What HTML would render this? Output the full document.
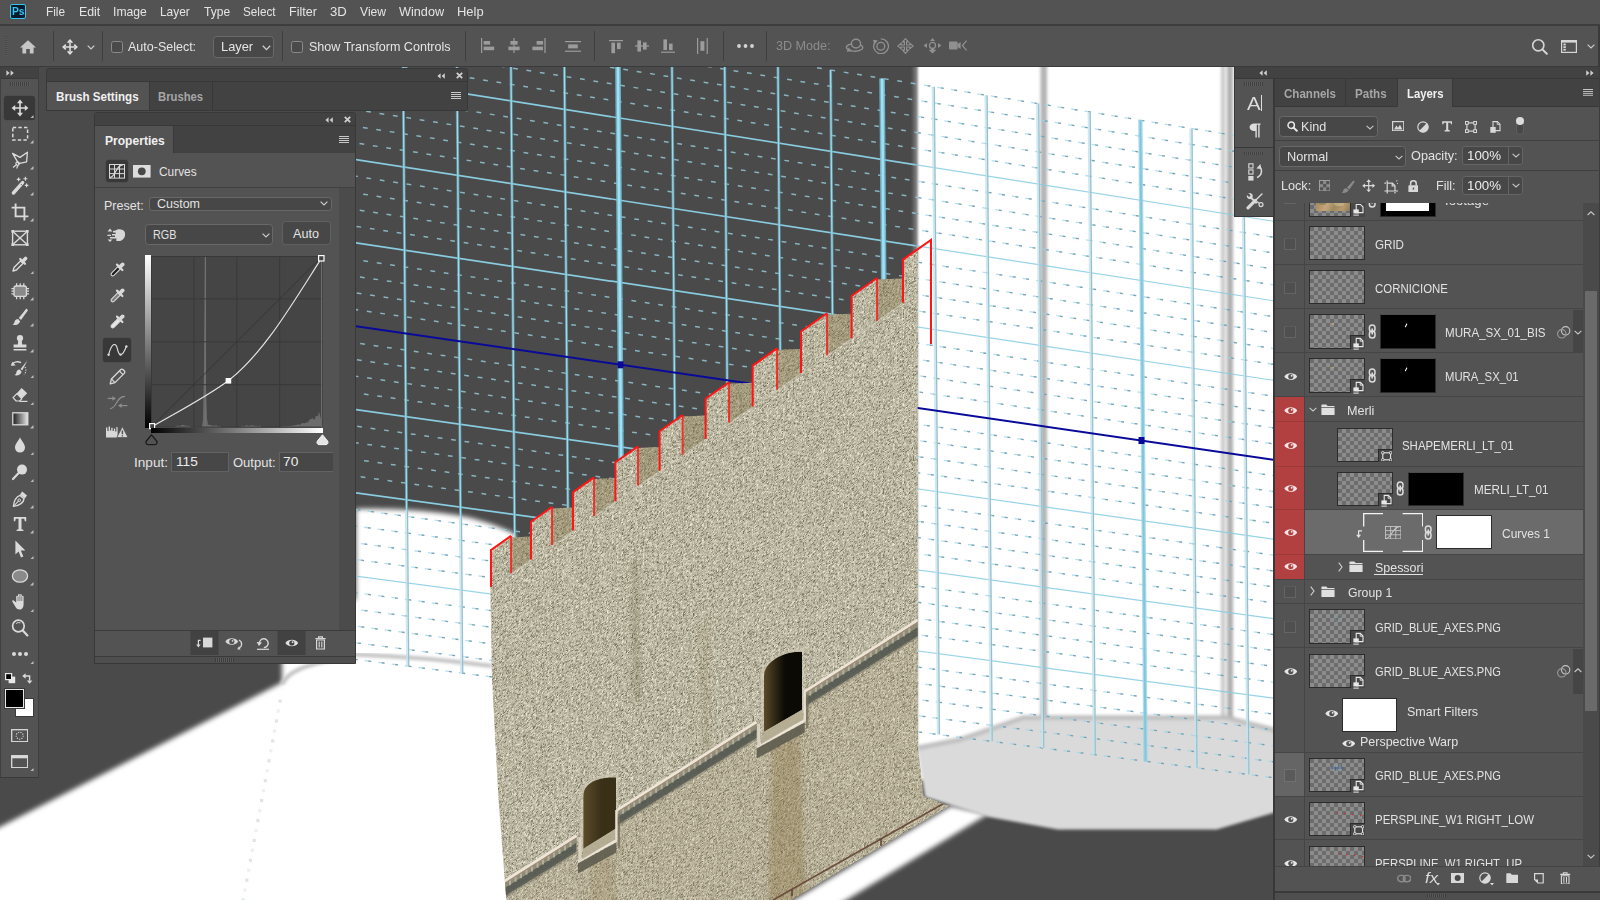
<!DOCTYPE html>
<html lang="en"><head><meta charset="utf-8"><title>Photoshop</title>
<style>
html,body{margin:0;padding:0}
body{width:1600px;height:900px;overflow:hidden;position:relative;background:#4a4a4a;font-family:"Liberation Sans",sans-serif}
.a{position:absolute;display:block}
.bl{display:inline-block;width:0;height:0;vertical-align:baseline}
.t{position:absolute;white-space:pre;line-height:1;transform-origin:0 50%;display:block}
svg{overflow:hidden}
</style></head>
<body>
<svg id="cv" width="1275" height="833" viewBox="0 67 1275 833" style="position:absolute;left:0;top:67px">
<defs>
<filter id="b1" x="-5%" y="-5%" width="110%" height="110%"><feGaussianBlur stdDeviation="1.6"/></filter>
<filter id="b2" x="-5%" y="-5%" width="110%" height="110%"><feGaussianBlur stdDeviation="2.5"/></filter>
<filter id="b05" x="-5%" y="-5%" width="110%" height="110%"><feGaussianBlur stdDeviation="0.6"/></filter>
<filter id="stone" x="0" y="0" width="100%" height="100%" filterUnits="objectBoundingBox" color-interpolation-filters="sRGB">
<feTurbulence type="fractalNoise" baseFrequency="0.42 0.8" numOctaves="3" seed="7" result="n"/>
<feColorMatrix in="n" type="matrix" values="0 0 0 0 0  0 0 0 0 0  0 0 0 0 0  -5.4 0 0 0 2.55" result="a"/>
<feFlood flood-color="#6b664f" result="dk"/>
<feComposite in="dk" in2="a" operator="in" result="dark"/>
<feColorMatrix in="n" type="matrix" values="0 0 0 0 0  0 0 0 0 0  0 0 0 0 0  0 5.4 0 0 -2.85" result="a2"/>
<feFlood flood-color="#efebd9" result="lt"/>
<feComposite in="lt" in2="a2" operator="in" result="light"/>
<feTurbulence type="fractalNoise" baseFrequency="0.9 0.95" numOctaves="1" seed="23" result="n2"/>
<feColorMatrix in="n2" type="matrix" values="0 0 0 0 0  0 0 0 0 0  0 0 0 0 0  -4.5 0 0 0 2.0" result="a3"/>
<feFlood flood-color="#5e5942" result="dk2"/>
<feComposite in="dk2" in2="a3" operator="in" result="dark2"/>
<feColorMatrix in="n2" type="matrix" values="0 0 0 0 0  0 0 0 0 0  0 0 0 0 0  0 4.5 0 0 -2.5" result="a4"/>
<feFlood flood-color="#f4f0e0" result="lt2"/>
<feComposite in="lt2" in2="a4" operator="in" result="light2"/>
<feMerge result="m"><feMergeNode in="SourceGraphic"/><feMergeNode in="dark"/><feMergeNode in="light"/><feMergeNode in="dark2"/><feMergeNode in="light2"/></feMerge>
<feComposite in="m" in2="SourceGraphic" operator="in"/>
</filter>
<linearGradient id="wallg" x1="0" y1="0" x2="0" y2="1">
<stop offset="0" stop-color="#bfbba6"/><stop offset="1" stop-color="#bab49d"/></linearGradient>
<clipPath id="cvclip"><rect x="0" y="67" width="1275" height="833"/></clipPath>
</defs>
<rect x="0" y="67" width="1275" height="833" fill="#4a4a4a"/>
<g filter="url(#b1)">
<path d="M917 60 L1290 60 L1290 780 L917 780 Z" fill="#fff"/>
</g><g filter="url(#b2)">
<path d="M-10 832 L282 682.5 L282 600 L356 600 L356 509 C400 508 450 512 478 520 C495 525 505 529 515 534 L515 910 L-10 910 Z" fill="#fff"/>
</g><g filter="url(#b1)">
</g>
<path d="M951 806 L988 814 L838 905 L786 905 Z" fill="#fff" filter="url(#b2)"/>
<g filter="url(#b1)">
<rect x="1040.5" y="60" width="6.5" height="670" fill="#b4b4b4"/>
<rect x="1221" y="60" width="4" height="670" fill="#c8c8c8"/>
<rect x="1227" y="60" width="6" height="670" fill="#b0b0b0"/>
<rect x="913" y="60" width="4" height="200" fill="#8a8a8a" opacity="0.6"/>
</g>
<path d="M282.5 684 C287 673 302 666.5 322 662 C335 659 345 656 356 654.5 C410 656.5 450 660.5 492 666" fill="none" stroke="#c2c2c2" stroke-width="4" filter="url(#b1)"/>
<rect x="278.5" y="699.5" width="3.2" height="3.2" fill="#dde1e6" opacity="0.9"/>
<rect x="276.6" y="709.5" width="3.2" height="3.2" fill="#dde1e6" opacity="0.5"/>
<rect x="274.8" y="719.4" width="3.2" height="3.2" fill="#dde1e6" opacity="0.9"/>
<rect x="272.9" y="729.4" width="3.2" height="3.2" fill="#dde1e6" opacity="0.5"/>
<rect x="271.1" y="739.3" width="3.2" height="3.2" fill="#dde1e6" opacity="0.9"/>
<rect x="269.2" y="749.2" width="3.2" height="3.2" fill="#dde1e6" opacity="0.5"/>
<rect x="267.4" y="759.2" width="3.2" height="3.2" fill="#dde1e6" opacity="0.9"/>
<rect x="265.6" y="769.1" width="3.2" height="3.2" fill="#dde1e6" opacity="0.5"/>
<rect x="263.7" y="779.1" width="3.2" height="3.2" fill="#dde1e6" opacity="0.9"/>
<rect x="261.9" y="789" width="3.2" height="3.2" fill="#dde1e6" opacity="0.5"/>
<rect x="260" y="799" width="3.2" height="3.2" fill="#dde1e6" opacity="0.9"/>
<rect x="258.1" y="809" width="3.2" height="3.2" fill="#dde1e6" opacity="0.5"/>
<rect x="256.3" y="818.9" width="3.2" height="3.2" fill="#dde1e6" opacity="0.9"/>
<rect x="254.4" y="828.9" width="3.2" height="3.2" fill="#dde1e6" opacity="0.5"/>
<rect x="252.6" y="838.8" width="3.2" height="3.2" fill="#dde1e6" opacity="0.9"/>
<rect x="250.8" y="848.8" width="3.2" height="3.2" fill="#dde1e6" opacity="0.5"/>
<rect x="248.9" y="858.7" width="3.2" height="3.2" fill="#dde1e6" opacity="0.9"/>
<rect x="247.1" y="868.6" width="3.2" height="3.2" fill="#dde1e6" opacity="0.5"/>
<rect x="245.2" y="878.6" width="3.2" height="3.2" fill="#dde1e6" opacity="0.9"/>
<rect x="243.3" y="888.5" width="3.2" height="3.2" fill="#dde1e6" opacity="0.5"/>
<rect x="241.5" y="898.5" width="3.2" height="3.2" fill="#dde1e6" opacity="0.9"/>
<g filter="url(#b1)">
<path d="M917 747 L960 738.7 L1023.6 716.7 L1226.5 716.7 L1290 733 L1290 808 L1216.7 829.6 L1057.8 829.6 L989 817 L925 797 Z" fill="#dadada"/>
<path d="M917 748 L960 739.5 L1023.6 717.5 L1226.5 717.5 L1290 734" fill="none" stroke="#b9b9b9" stroke-width="5" opacity="0.8"/>
</g>
<clipPath id="gdark"><path d="M356 60 L915.5 60 L915.5 545 L515 545 L515 534 C505 529 495 525 478 520 C450 512 400 508 356 509 Z"/></clipPath>
<clipPath id="glight"><path clip-rule="evenodd" d="M0 67 H1275 V900 H0 Z M356 60 L915.5 60 L915.5 545 L515 545 L515 534 C505 529 495 525 478 520 C450 512 400 508 356 509 Z M0 60 H356 V640 H0 Z"/></clipPath>
<g clip-path="url(#gdark)" fill="none">
<path d="M282 -18.9 L1275 142" stroke="#a4e0f0" stroke-width="1.5" stroke-dasharray="4.8 8.75" stroke-dashoffset="0" opacity="0.7"/>
<path d="M282 -2.1 L1275 157.9" stroke="#a4e0f0" stroke-width="1.5" stroke-dasharray="4.8 8.75" stroke-dashoffset="3.3" opacity="0.7"/>
<path d="M282 14.6 L1275 173.8" stroke="#a4e0f0" stroke-width="1.5" stroke-dasharray="4.8 8.75" stroke-dashoffset="6.6" opacity="0.7"/>
<path d="M282 31.3 L1275 189.7" stroke="#a4e0f0" stroke-width="1.5" stroke-dasharray="4.8 8.75" stroke-dashoffset="9.9" opacity="0.7"/>
<path d="M282 48 L1275 205.6" stroke="#a4e0f0" stroke-width="1.5" stroke-dasharray="4.8 8.75" stroke-dashoffset="13.2" opacity="0.7"/>
<path d="M282 64.7 L1275 221.5" stroke="#8ed6ec" stroke-width="1.7" opacity="0.92"/>
<path d="M282 81.5 L1275 237.4" stroke="#a4e0f0" stroke-width="1.5" stroke-dasharray="4.8 8.75" stroke-dashoffset="6.4" opacity="0.7"/>
<path d="M282 98.2 L1275 253.3" stroke="#a4e0f0" stroke-width="1.5" stroke-dasharray="4.8 8.75" stroke-dashoffset="9.7" opacity="0.7"/>
<path d="M282 114.9 L1275 269.2" stroke="#a4e0f0" stroke-width="1.5" stroke-dasharray="4.8 8.75" stroke-dashoffset="13" opacity="0.7"/>
<path d="M282 131.6 L1275 285.1" stroke="#a4e0f0" stroke-width="1.5" stroke-dasharray="4.8 8.75" stroke-dashoffset="2.9" opacity="0.7"/>
<path d="M282 148.3 L1275 301" stroke="#8ed6ec" stroke-width="1.7" opacity="0.92"/>
<path d="M282 165 L1275 316.9" stroke="#a4e0f0" stroke-width="1.5" stroke-dasharray="4.8 8.75" stroke-dashoffset="9.5" opacity="0.7"/>
<path d="M282 181.8 L1275 332.8" stroke="#a4e0f0" stroke-width="1.5" stroke-dasharray="4.8 8.75" stroke-dashoffset="12.8" opacity="0.7"/>
<path d="M282 198.5 L1275 348.7" stroke="#a4e0f0" stroke-width="1.5" stroke-dasharray="4.8 8.75" stroke-dashoffset="2.7" opacity="0.7"/>
<path d="M282 215.2 L1275 364.6" stroke="#a4e0f0" stroke-width="1.5" stroke-dasharray="4.8 8.75" stroke-dashoffset="6" opacity="0.7"/>
<path d="M282 231.9 L1275 380.5" stroke="#8ed6ec" stroke-width="1.7" opacity="0.92"/>
<path d="M282 248.6 L1275 396.4" stroke="#a4e0f0" stroke-width="1.5" stroke-dasharray="4.8 8.75" stroke-dashoffset="12.6" opacity="0.7"/>
<path d="M282 265.4 L1275 412.3" stroke="#a4e0f0" stroke-width="1.5" stroke-dasharray="4.8 8.75" stroke-dashoffset="2.5" opacity="0.7"/>
<path d="M282 282.1 L1275 428.2" stroke="#a4e0f0" stroke-width="1.5" stroke-dasharray="4.8 8.75" stroke-dashoffset="5.8" opacity="0.7"/>
<path d="M282 298.8 L1275 444.1" stroke="#a4e0f0" stroke-width="1.5" stroke-dasharray="4.8 8.75" stroke-dashoffset="9.1" opacity="0.7"/>
<path d="M282 332.2 L1275 475.9" stroke="#a4e0f0" stroke-width="1.5" stroke-dasharray="4.8 8.75" stroke-dashoffset="2.3" opacity="0.7"/>
<path d="M282 349 L1275 491.8" stroke="#a4e0f0" stroke-width="1.5" stroke-dasharray="4.8 8.75" stroke-dashoffset="5.6" opacity="0.7"/>
<path d="M282 365.7 L1275 507.7" stroke="#a4e0f0" stroke-width="1.5" stroke-dasharray="4.8 8.75" stroke-dashoffset="8.9" opacity="0.7"/>
<path d="M282 382.4 L1275 523.5" stroke="#a4e0f0" stroke-width="1.5" stroke-dasharray="4.8 8.75" stroke-dashoffset="12.2" opacity="0.7"/>
<path d="M282 399.1 L1275 539.4" stroke="#8ed6ec" stroke-width="1.7" opacity="0.92"/>
<path d="M282 415.8 L1275 555.3" stroke="#a4e0f0" stroke-width="1.5" stroke-dasharray="4.8 8.75" stroke-dashoffset="5.4" opacity="0.7"/>
<path d="M282 432.5 L1275 571.2" stroke="#a4e0f0" stroke-width="1.5" stroke-dasharray="4.8 8.75" stroke-dashoffset="8.7" opacity="0.7"/>
<path d="M282 449.3 L1275 587.1" stroke="#a4e0f0" stroke-width="1.5" stroke-dasharray="4.8 8.75" stroke-dashoffset="12" opacity="0.7"/>
<path d="M282 466 L1275 603" stroke="#a4e0f0" stroke-width="1.5" stroke-dasharray="4.8 8.75" stroke-dashoffset="1.9" opacity="0.7"/>
<path d="M282 482.7 L1275 618.9" stroke="#8ed6ec" stroke-width="1.7" opacity="0.92"/>
<path d="M282 499.4 L1275 634.8" stroke="#a4e0f0" stroke-width="1.5" stroke-dasharray="4.8 8.75" stroke-dashoffset="8.5" opacity="0.7"/>
<path d="M282 516.1 L1275 650.7" stroke="#a4e0f0" stroke-width="1.5" stroke-dasharray="4.8 8.75" stroke-dashoffset="11.8" opacity="0.7"/>
<path d="M282 532.9 L1275 666.6" stroke="#a4e0f0" stroke-width="1.5" stroke-dasharray="4.8 8.75" stroke-dashoffset="1.7" opacity="0.7"/>
<path d="M282 549.6 L1275 682.5" stroke="#a4e0f0" stroke-width="1.5" stroke-dasharray="4.8 8.75" stroke-dashoffset="5" opacity="0.7"/>
<path d="M282 566.3 L1275 698.4" stroke="#8ed6ec" stroke-width="1.7" opacity="0.92"/>
<path d="M282 583 L1275 714.3" stroke="#a4e0f0" stroke-width="1.5" stroke-dasharray="4.8 8.75" stroke-dashoffset="11.6" opacity="0.7"/>
<path d="M282 599.7 L1275 730.2" stroke="#a4e0f0" stroke-width="1.5" stroke-dasharray="4.8 8.75" stroke-dashoffset="1.5" opacity="0.7"/>
<path d="M282 616.5 L1275 746.1" stroke="#a4e0f0" stroke-width="1.5" stroke-dasharray="4.8 8.75" stroke-dashoffset="4.8" opacity="0.7"/>
<path d="M282 633.2 L1275 762" stroke="#a4e0f0" stroke-width="1.5" stroke-dasharray="4.8 8.75" stroke-dashoffset="8.1" opacity="0.7"/>
<path d="M282 649.9 L1275 777.9" stroke="#a4e0f0" stroke-width="1.5" stroke-dasharray="4.8 8.75" stroke-dashoffset="11.4" opacity="0.7"/>
<path d="M348.7 -8 L354 659.2" stroke="#6aa6b8" stroke-width="3" opacity="0.7"/>
<path d="M348.7 -8 L354 659.2" stroke="#9bdcee" stroke-width="1.3"/>
<path d="M402.6 0.7 L407.8 666.1" stroke="#6aa6b8" stroke-width="3" opacity="0.7"/>
<path d="M402.6 0.7 L407.8 666.1" stroke="#9bdcee" stroke-width="1.3"/>
<path d="M456.5 9.4 L461.8 673.1" stroke="#6aa6b8" stroke-width="3" opacity="0.7"/>
<path d="M456.5 9.4 L461.8 673.1" stroke="#9bdcee" stroke-width="1.3"/>
<path d="M510.6 18.2 L515.8 680" stroke="#6aa6b8" stroke-width="3" opacity="0.7"/>
<path d="M510.6 18.2 L515.8 680" stroke="#9bdcee" stroke-width="1.3"/>
<path d="M564.1 26.8 L569.3 686.9" stroke="#6aa6b8" stroke-width="3" opacity="0.7"/>
<path d="M564.1 26.8 L569.3 686.9" stroke="#9bdcee" stroke-width="1.3"/>
<path d="M617.7 35.5 L622.9 693.8" stroke="#74bdd2" stroke-width="5.6" opacity="0.9"/>
<path d="M617.7 35.5 L622.9 693.8" stroke="#9fe0f4" stroke-width="2.6"/>
<path d="M671.8 44.3 L677 700.8" stroke="#6aa6b8" stroke-width="3" opacity="0.7"/>
<path d="M671.8 44.3 L677 700.8" stroke="#9bdcee" stroke-width="1.3"/>
<path d="M724.6 52.9 L729.7 707.6" stroke="#6aa6b8" stroke-width="3" opacity="0.7"/>
<path d="M724.6 52.9 L729.7 707.6" stroke="#9bdcee" stroke-width="1.3"/>
<path d="M777.9 61.5 L783.1 714.5" stroke="#6aa6b8" stroke-width="3" opacity="0.7"/>
<path d="M777.9 61.5 L783.1 714.5" stroke="#9bdcee" stroke-width="1.3"/>
<path d="M830.6 70 L835.7 721.3" stroke="#6aa6b8" stroke-width="3" opacity="0.7"/>
<path d="M830.6 70 L835.7 721.3" stroke="#9bdcee" stroke-width="1.3"/>
<path d="M882.1 78.4 L887.2 727.9" stroke="#74bdd2" stroke-width="5.6" opacity="0.9"/>
<path d="M882.1 78.4 L887.2 727.9" stroke="#9fe0f4" stroke-width="2.6"/>
<path d="M933.4 86.7 L938.5 734.5" stroke="#6aa6b8" stroke-width="3" opacity="0.7"/>
<path d="M933.4 86.7 L938.5 734.5" stroke="#9bdcee" stroke-width="1.3"/>
<path d="M986.2 95.2 L991.3 741.3" stroke="#6aa6b8" stroke-width="3" opacity="0.7"/>
<path d="M986.2 95.2 L991.3 741.3" stroke="#9bdcee" stroke-width="1.3"/>
<path d="M1037.8 103.6 L1042.9 748" stroke="#6aa6b8" stroke-width="3" opacity="0.7"/>
<path d="M1037.8 103.6 L1042.9 748" stroke="#9bdcee" stroke-width="1.3"/>
<path d="M1089.3 112 L1094.4 754.6" stroke="#6aa6b8" stroke-width="3" opacity="0.7"/>
<path d="M1089.3 112 L1094.4 754.6" stroke="#9bdcee" stroke-width="1.3"/>
<path d="M1140.4 120.2 L1145.5 761.2" stroke="#74bdd2" stroke-width="5.6" opacity="0.9"/>
<path d="M1140.4 120.2 L1145.5 761.2" stroke="#9fe0f4" stroke-width="2.6"/>
<path d="M1191.1 128.4 L1196.1 767.7" stroke="#6aa6b8" stroke-width="3" opacity="0.7"/>
<path d="M1191.1 128.4 L1196.1 767.7" stroke="#9bdcee" stroke-width="1.3"/>
<path d="M1242.9 136.8 L1248 774.4" stroke="#6aa6b8" stroke-width="3" opacity="0.7"/>
<path d="M1242.9 136.8 L1248 774.4" stroke="#9bdcee" stroke-width="1.3"/>
</g>
<g clip-path="url(#glight)" fill="none">
<path d="M282 -18.9 L1275 142" stroke="#9ad4e8" stroke-width="1.3" stroke-dasharray="6.6 6.95" stroke-dashoffset="0" opacity="0.75"/>
<path d="M282 -18.9 L1275 142" stroke="#6f8c98" stroke-width="1.3" stroke-dasharray="2.8 10.75" stroke-dashoffset="-3.6" opacity="0.75"/>
<path d="M282 -2.1 L1275 157.9" stroke="#9ad4e8" stroke-width="1.3" stroke-dasharray="6.6 6.95" stroke-dashoffset="3.3" opacity="0.75"/>
<path d="M282 -2.1 L1275 157.9" stroke="#6f8c98" stroke-width="1.3" stroke-dasharray="2.8 10.75" stroke-dashoffset="-0.3" opacity="0.75"/>
<path d="M282 14.6 L1275 173.8" stroke="#9ad4e8" stroke-width="1.3" stroke-dasharray="6.6 6.95" stroke-dashoffset="6.6" opacity="0.75"/>
<path d="M282 14.6 L1275 173.8" stroke="#6f8c98" stroke-width="1.3" stroke-dasharray="2.8 10.75" stroke-dashoffset="3" opacity="0.75"/>
<path d="M282 31.3 L1275 189.7" stroke="#9ad4e8" stroke-width="1.3" stroke-dasharray="6.6 6.95" stroke-dashoffset="9.9" opacity="0.75"/>
<path d="M282 31.3 L1275 189.7" stroke="#6f8c98" stroke-width="1.3" stroke-dasharray="2.8 10.75" stroke-dashoffset="6.3" opacity="0.75"/>
<path d="M282 48 L1275 205.6" stroke="#9ad4e8" stroke-width="1.3" stroke-dasharray="6.6 6.95" stroke-dashoffset="13.2" opacity="0.75"/>
<path d="M282 48 L1275 205.6" stroke="#6f8c98" stroke-width="1.3" stroke-dasharray="2.8 10.75" stroke-dashoffset="9.6" opacity="0.75"/>
<path d="M282 64.7 L1275 221.5" stroke="#86cbe2" stroke-width="1.2" opacity="0.85"/>
<path d="M282 81.5 L1275 237.4" stroke="#9ad4e8" stroke-width="1.3" stroke-dasharray="6.6 6.95" stroke-dashoffset="6.4" opacity="0.75"/>
<path d="M282 81.5 L1275 237.4" stroke="#6f8c98" stroke-width="1.3" stroke-dasharray="2.8 10.75" stroke-dashoffset="2.8" opacity="0.75"/>
<path d="M282 98.2 L1275 253.3" stroke="#9ad4e8" stroke-width="1.3" stroke-dasharray="6.6 6.95" stroke-dashoffset="9.7" opacity="0.75"/>
<path d="M282 98.2 L1275 253.3" stroke="#6f8c98" stroke-width="1.3" stroke-dasharray="2.8 10.75" stroke-dashoffset="6.1" opacity="0.75"/>
<path d="M282 114.9 L1275 269.2" stroke="#9ad4e8" stroke-width="1.3" stroke-dasharray="6.6 6.95" stroke-dashoffset="13" opacity="0.75"/>
<path d="M282 114.9 L1275 269.2" stroke="#6f8c98" stroke-width="1.3" stroke-dasharray="2.8 10.75" stroke-dashoffset="9.4" opacity="0.75"/>
<path d="M282 131.6 L1275 285.1" stroke="#9ad4e8" stroke-width="1.3" stroke-dasharray="6.6 6.95" stroke-dashoffset="2.9" opacity="0.75"/>
<path d="M282 131.6 L1275 285.1" stroke="#6f8c98" stroke-width="1.3" stroke-dasharray="2.8 10.75" stroke-dashoffset="-0.7" opacity="0.75"/>
<path d="M282 148.3 L1275 301" stroke="#86cbe2" stroke-width="1.2" opacity="0.85"/>
<path d="M282 165 L1275 316.9" stroke="#9ad4e8" stroke-width="1.3" stroke-dasharray="6.6 6.95" stroke-dashoffset="9.5" opacity="0.75"/>
<path d="M282 165 L1275 316.9" stroke="#6f8c98" stroke-width="1.3" stroke-dasharray="2.8 10.75" stroke-dashoffset="5.9" opacity="0.75"/>
<path d="M282 181.8 L1275 332.8" stroke="#9ad4e8" stroke-width="1.3" stroke-dasharray="6.6 6.95" stroke-dashoffset="12.8" opacity="0.75"/>
<path d="M282 181.8 L1275 332.8" stroke="#6f8c98" stroke-width="1.3" stroke-dasharray="2.8 10.75" stroke-dashoffset="9.2" opacity="0.75"/>
<path d="M282 198.5 L1275 348.7" stroke="#9ad4e8" stroke-width="1.3" stroke-dasharray="6.6 6.95" stroke-dashoffset="2.7" opacity="0.75"/>
<path d="M282 198.5 L1275 348.7" stroke="#6f8c98" stroke-width="1.3" stroke-dasharray="2.8 10.75" stroke-dashoffset="-0.9" opacity="0.75"/>
<path d="M282 215.2 L1275 364.6" stroke="#9ad4e8" stroke-width="1.3" stroke-dasharray="6.6 6.95" stroke-dashoffset="6" opacity="0.75"/>
<path d="M282 215.2 L1275 364.6" stroke="#6f8c98" stroke-width="1.3" stroke-dasharray="2.8 10.75" stroke-dashoffset="2.4" opacity="0.75"/>
<path d="M282 231.9 L1275 380.5" stroke="#86cbe2" stroke-width="1.2" opacity="0.85"/>
<path d="M282 248.6 L1275 396.4" stroke="#9ad4e8" stroke-width="1.3" stroke-dasharray="6.6 6.95" stroke-dashoffset="12.6" opacity="0.75"/>
<path d="M282 248.6 L1275 396.4" stroke="#6f8c98" stroke-width="1.3" stroke-dasharray="2.8 10.75" stroke-dashoffset="9" opacity="0.75"/>
<path d="M282 265.4 L1275 412.3" stroke="#9ad4e8" stroke-width="1.3" stroke-dasharray="6.6 6.95" stroke-dashoffset="2.5" opacity="0.75"/>
<path d="M282 265.4 L1275 412.3" stroke="#6f8c98" stroke-width="1.3" stroke-dasharray="2.8 10.75" stroke-dashoffset="-1.1" opacity="0.75"/>
<path d="M282 282.1 L1275 428.2" stroke="#9ad4e8" stroke-width="1.3" stroke-dasharray="6.6 6.95" stroke-dashoffset="5.8" opacity="0.75"/>
<path d="M282 282.1 L1275 428.2" stroke="#6f8c98" stroke-width="1.3" stroke-dasharray="2.8 10.75" stroke-dashoffset="2.2" opacity="0.75"/>
<path d="M282 298.8 L1275 444.1" stroke="#9ad4e8" stroke-width="1.3" stroke-dasharray="6.6 6.95" stroke-dashoffset="9.1" opacity="0.75"/>
<path d="M282 298.8 L1275 444.1" stroke="#6f8c98" stroke-width="1.3" stroke-dasharray="2.8 10.75" stroke-dashoffset="5.5" opacity="0.75"/>
<path d="M282 332.2 L1275 475.9" stroke="#9ad4e8" stroke-width="1.3" stroke-dasharray="6.6 6.95" stroke-dashoffset="2.3" opacity="0.75"/>
<path d="M282 332.2 L1275 475.9" stroke="#6f8c98" stroke-width="1.3" stroke-dasharray="2.8 10.75" stroke-dashoffset="-1.3" opacity="0.75"/>
<path d="M282 349 L1275 491.8" stroke="#9ad4e8" stroke-width="1.3" stroke-dasharray="6.6 6.95" stroke-dashoffset="5.6" opacity="0.75"/>
<path d="M282 349 L1275 491.8" stroke="#6f8c98" stroke-width="1.3" stroke-dasharray="2.8 10.75" stroke-dashoffset="2" opacity="0.75"/>
<path d="M282 365.7 L1275 507.7" stroke="#9ad4e8" stroke-width="1.3" stroke-dasharray="6.6 6.95" stroke-dashoffset="8.9" opacity="0.75"/>
<path d="M282 365.7 L1275 507.7" stroke="#6f8c98" stroke-width="1.3" stroke-dasharray="2.8 10.75" stroke-dashoffset="5.3" opacity="0.75"/>
<path d="M282 382.4 L1275 523.5" stroke="#9ad4e8" stroke-width="1.3" stroke-dasharray="6.6 6.95" stroke-dashoffset="12.2" opacity="0.75"/>
<path d="M282 382.4 L1275 523.5" stroke="#6f8c98" stroke-width="1.3" stroke-dasharray="2.8 10.75" stroke-dashoffset="8.6" opacity="0.75"/>
<path d="M282 399.1 L1275 539.4" stroke="#86cbe2" stroke-width="1.2" opacity="0.85"/>
<path d="M282 415.8 L1275 555.3" stroke="#9ad4e8" stroke-width="1.3" stroke-dasharray="6.6 6.95" stroke-dashoffset="5.4" opacity="0.75"/>
<path d="M282 415.8 L1275 555.3" stroke="#6f8c98" stroke-width="1.3" stroke-dasharray="2.8 10.75" stroke-dashoffset="1.8" opacity="0.75"/>
<path d="M282 432.5 L1275 571.2" stroke="#9ad4e8" stroke-width="1.3" stroke-dasharray="6.6 6.95" stroke-dashoffset="8.7" opacity="0.75"/>
<path d="M282 432.5 L1275 571.2" stroke="#6f8c98" stroke-width="1.3" stroke-dasharray="2.8 10.75" stroke-dashoffset="5.1" opacity="0.75"/>
<path d="M282 449.3 L1275 587.1" stroke="#9ad4e8" stroke-width="1.3" stroke-dasharray="6.6 6.95" stroke-dashoffset="12" opacity="0.75"/>
<path d="M282 449.3 L1275 587.1" stroke="#6f8c98" stroke-width="1.3" stroke-dasharray="2.8 10.75" stroke-dashoffset="8.4" opacity="0.75"/>
<path d="M282 466 L1275 603" stroke="#9ad4e8" stroke-width="1.3" stroke-dasharray="6.6 6.95" stroke-dashoffset="1.9" opacity="0.75"/>
<path d="M282 466 L1275 603" stroke="#6f8c98" stroke-width="1.3" stroke-dasharray="2.8 10.75" stroke-dashoffset="-1.7" opacity="0.75"/>
<path d="M282 482.7 L1275 618.9" stroke="#86cbe2" stroke-width="1.2" opacity="0.85"/>
<path d="M282 499.4 L1275 634.8" stroke="#9ad4e8" stroke-width="1.3" stroke-dasharray="6.6 6.95" stroke-dashoffset="8.5" opacity="0.75"/>
<path d="M282 499.4 L1275 634.8" stroke="#6f8c98" stroke-width="1.3" stroke-dasharray="2.8 10.75" stroke-dashoffset="4.9" opacity="0.75"/>
<path d="M282 516.1 L1275 650.7" stroke="#9ad4e8" stroke-width="1.3" stroke-dasharray="6.6 6.95" stroke-dashoffset="11.8" opacity="0.75"/>
<path d="M282 516.1 L1275 650.7" stroke="#6f8c98" stroke-width="1.3" stroke-dasharray="2.8 10.75" stroke-dashoffset="8.2" opacity="0.75"/>
<path d="M282 532.9 L1275 666.6" stroke="#9ad4e8" stroke-width="1.3" stroke-dasharray="6.6 6.95" stroke-dashoffset="1.7" opacity="0.75"/>
<path d="M282 532.9 L1275 666.6" stroke="#6f8c98" stroke-width="1.3" stroke-dasharray="2.8 10.75" stroke-dashoffset="-1.9" opacity="0.75"/>
<path d="M282 549.6 L1275 682.5" stroke="#9ad4e8" stroke-width="1.3" stroke-dasharray="6.6 6.95" stroke-dashoffset="5" opacity="0.75"/>
<path d="M282 549.6 L1275 682.5" stroke="#6f8c98" stroke-width="1.3" stroke-dasharray="2.8 10.75" stroke-dashoffset="1.4" opacity="0.75"/>
<path d="M282 566.3 L1275 698.4" stroke="#86cbe2" stroke-width="1.2" opacity="0.85"/>
<path d="M282 583 L1275 714.3" stroke="#9ad4e8" stroke-width="1.3" stroke-dasharray="6.6 6.95" stroke-dashoffset="11.6" opacity="0.75"/>
<path d="M282 583 L1275 714.3" stroke="#6f8c98" stroke-width="1.3" stroke-dasharray="2.8 10.75" stroke-dashoffset="8" opacity="0.75"/>
<path d="M282 599.7 L1275 730.2" stroke="#9ad4e8" stroke-width="1.3" stroke-dasharray="6.6 6.95" stroke-dashoffset="1.5" opacity="0.75"/>
<path d="M282 599.7 L1275 730.2" stroke="#6f8c98" stroke-width="1.3" stroke-dasharray="2.8 10.75" stroke-dashoffset="-2.1" opacity="0.75"/>
<path d="M282 616.5 L1275 746.1" stroke="#9ad4e8" stroke-width="1.3" stroke-dasharray="6.6 6.95" stroke-dashoffset="4.8" opacity="0.75"/>
<path d="M282 616.5 L1275 746.1" stroke="#6f8c98" stroke-width="1.3" stroke-dasharray="2.8 10.75" stroke-dashoffset="1.2" opacity="0.75"/>
<path d="M282 633.2 L1275 762" stroke="#9ad4e8" stroke-width="1.3" stroke-dasharray="6.6 6.95" stroke-dashoffset="8.1" opacity="0.75"/>
<path d="M282 633.2 L1275 762" stroke="#6f8c98" stroke-width="1.3" stroke-dasharray="2.8 10.75" stroke-dashoffset="4.5" opacity="0.75"/>
<path d="M282 649.9 L1275 777.9" stroke="#9ad4e8" stroke-width="1.3" stroke-dasharray="6.6 6.95" stroke-dashoffset="11.4" opacity="0.75"/>
<path d="M282 649.9 L1275 777.9" stroke="#6f8c98" stroke-width="1.3" stroke-dasharray="2.8 10.75" stroke-dashoffset="7.8" opacity="0.75"/>
<path d="M348.7 -8 L354 659.2" stroke="#c4e2ec" stroke-width="3.4" opacity="0.8"/>
<path d="M349.6 -8 L354.9 659.2" stroke="#86b4c2" stroke-width="1.1" opacity="0.8"/>
<path d="M402.6 0.7 L407.8 666.1" stroke="#c4e2ec" stroke-width="3.4" opacity="0.8"/>
<path d="M403.5 0.7 L408.7 666.1" stroke="#86b4c2" stroke-width="1.1" opacity="0.8"/>
<path d="M456.5 9.4 L461.8 673.1" stroke="#c4e2ec" stroke-width="3.4" opacity="0.8"/>
<path d="M457.4 9.4 L462.7 673.1" stroke="#86b4c2" stroke-width="1.1" opacity="0.8"/>
<path d="M510.6 18.2 L515.8 680" stroke="#c4e2ec" stroke-width="3.4" opacity="0.8"/>
<path d="M511.5 18.2 L516.7 680" stroke="#86b4c2" stroke-width="1.1" opacity="0.8"/>
<path d="M564.1 26.8 L569.3 686.9" stroke="#c4e2ec" stroke-width="3.4" opacity="0.8"/>
<path d="M565 26.8 L570.2 686.9" stroke="#86b4c2" stroke-width="1.1" opacity="0.8"/>
<path d="M617.7 35.5 L622.9 693.8" stroke="#9fd6e8" stroke-width="4.4" opacity="0.85"/>
<path d="M617.7 35.5 L622.9 693.8" stroke="#7fc4da" stroke-width="2" opacity="0.9"/>
<path d="M671.8 44.3 L677 700.8" stroke="#c4e2ec" stroke-width="3.4" opacity="0.8"/>
<path d="M672.7 44.3 L677.9 700.8" stroke="#86b4c2" stroke-width="1.1" opacity="0.8"/>
<path d="M724.6 52.9 L729.7 707.6" stroke="#c4e2ec" stroke-width="3.4" opacity="0.8"/>
<path d="M725.5 52.9 L730.6 707.6" stroke="#86b4c2" stroke-width="1.1" opacity="0.8"/>
<path d="M777.9 61.5 L783.1 714.5" stroke="#c4e2ec" stroke-width="3.4" opacity="0.8"/>
<path d="M778.8 61.5 L784 714.5" stroke="#86b4c2" stroke-width="1.1" opacity="0.8"/>
<path d="M830.6 70 L835.7 721.3" stroke="#c4e2ec" stroke-width="3.4" opacity="0.8"/>
<path d="M831.5 70 L836.6 721.3" stroke="#86b4c2" stroke-width="1.1" opacity="0.8"/>
<path d="M882.1 78.4 L887.2 727.9" stroke="#9fd6e8" stroke-width="4.4" opacity="0.85"/>
<path d="M882.1 78.4 L887.2 727.9" stroke="#7fc4da" stroke-width="2" opacity="0.9"/>
<path d="M933.4 86.7 L938.5 734.5" stroke="#c4e2ec" stroke-width="3.4" opacity="0.8"/>
<path d="M934.3 86.7 L939.4 734.5" stroke="#86b4c2" stroke-width="1.1" opacity="0.8"/>
<path d="M986.2 95.2 L991.3 741.3" stroke="#c4e2ec" stroke-width="3.4" opacity="0.8"/>
<path d="M987.1 95.2 L992.2 741.3" stroke="#86b4c2" stroke-width="1.1" opacity="0.8"/>
<path d="M1037.8 103.6 L1042.9 748" stroke="#c4e2ec" stroke-width="3.4" opacity="0.8"/>
<path d="M1038.7 103.6 L1043.8 748" stroke="#86b4c2" stroke-width="1.1" opacity="0.8"/>
<path d="M1089.3 112 L1094.4 754.6" stroke="#c4e2ec" stroke-width="3.4" opacity="0.8"/>
<path d="M1090.2 112 L1095.3 754.6" stroke="#86b4c2" stroke-width="1.1" opacity="0.8"/>
<path d="M1140.4 120.2 L1145.5 761.2" stroke="#9fd6e8" stroke-width="4.4" opacity="0.85"/>
<path d="M1140.4 120.2 L1145.5 761.2" stroke="#7fc4da" stroke-width="2" opacity="0.9"/>
<path d="M1191.1 128.4 L1196.1 767.7" stroke="#c4e2ec" stroke-width="3.4" opacity="0.8"/>
<path d="M1192 128.4 L1197 767.7" stroke="#86b4c2" stroke-width="1.1" opacity="0.8"/>
<path d="M1242.9 136.8 L1248 774.4" stroke="#c4e2ec" stroke-width="3.4" opacity="0.8"/>
<path d="M1243.8 136.8 L1248.9 774.4" stroke="#86b4c2" stroke-width="1.1" opacity="0.8"/>
</g>
<g clip-path="url(#cvclip)" fill="none">
<path d="M282 315.5 L1275 460" stroke="#0a0a9a" stroke-width="2"/>
<rect x="617.5" y="361.3" width="6" height="7" fill="#0a0a9a"/>
<rect x="1138.5" y="437" width="6" height="7" fill="#0a0a9a"/>
</g>
<clipPath id="wallclip"><path d="M491 550 L511 535.9 L511 537.4 L531 536.4 L531 521.8 L552 507 L552 508.5 L573 507.5 L573 492.2 L594 477.4 L594 478.9 L615.4 477.9 L615.4 462.3 L638 446.4 L638 447.9 L659.6 446.9 L659.6 431.2 L682.6 415 L682.6 416.5 L705.6 415.5 L705.6 398.8 L729 382.3 L729 383.8 L752.7 382.8 L752.7 365.6 L777 348.4 L777 349.9 L801 348.9 L801 331.5 L827 313.2 L827 314.7 L851.6 313.7 L851.6 295.9 L877 278 L877 279.5 L903 278.5 L903 259.6 L917.6 249.3 L917.8 700 L918 747 L923.5 796 L949 806 L786 903 L506.6 903 L498.5 800 L492 680 L490.3 587 L490.5 560 Z"/></clipPath>
<g clip-path="url(#wallclip)">
<g transform="skewY(-33.5)">
<rect x="470" y="370" width="500" height="1180" fill="#bdb8a2" filter="url(#stone)"/>
</g>
<path d="M511 536.9 L531 535.9 L531 559.4 L511 573.2 Z" fill="#7d6f45" opacity="0.38"/>
<path d="M552 508 L573 507 L573 530.4 L552 544.9 Z" fill="#7d6f45" opacity="0.38"/>
<path d="M594 478.4 L615.4 477.4 L615.4 501.2 L594 515.9 Z" fill="#7d6f45" opacity="0.38"/>
<path d="M638 447.4 L659.6 446.4 L659.6 470.7 L638 485.6 Z" fill="#7d6f45" opacity="0.38"/>
<path d="M682.6 416 L705.6 415 L705.6 438.9 L682.6 454.8 Z" fill="#7d6f45" opacity="0.38"/>
<path d="M729 383.3 L752.7 382.3 L752.7 406.4 L729 422.8 Z" fill="#7d6f45" opacity="0.38"/>
<path d="M777 349.4 L801 348.4 L801 373.1 L777 389.7 Z" fill="#7d6f45" opacity="0.38"/>
<path d="M827 314.2 L851.6 313.2 L851.6 338.2 L827 355.2 Z" fill="#7d6f45" opacity="0.38"/>
<path d="M877 279 L903 278 L903 302.7 L877 320.7 Z" fill="#7d6f45" opacity="0.38"/>
<path d="M491 588 L916 294.8" stroke="#d8d4c2" stroke-width="2" opacity="0.35"/>
<path d="M480 896.7 L920 618.6 L960 910 L480 910 Z" fill="#a0926a" opacity="0.16"/>
<g filter="url(#b2)">
<path d="M772 748 L800 735 L806 905 L768 905 Z" fill="#8a7444" opacity="0.35"/>
<path d="M632 560 L637 560 L640 700 L634 700 Z" fill="#6e6648" opacity="0.35"/>
<path d="M593 860 L612 850 L616 905 L590 905 Z" fill="#8a7444" opacity="0.2"/>
<path d="M700 620 L708 620 L712 760 L702 760 Z" fill="#8a7f5a" opacity="0.2"/>
</g>
<path d="M803.8 697.1 L918 624.9 L918 635.9 L803.8 707.1 Z" fill="#4f534c" opacity="0.88"/>
<path d="M803.8 705.1 L918 633.9 L918 637.9 L803.8 709.1 Z" fill="#6a6a5c" opacity="0.4"/>
<path d="M803.8 693.6 L918 621.4 L918 626.9 L803.8 699.1 Z" fill="#8f8c78"/>
<path d="M804.8 693.9 L804.8 698.9" stroke="#c4bfac" stroke-width="2" opacity="0.7"/>
<path d="M810.3 690.5 L810.3 695.5" stroke="#c4bfac" stroke-width="2" opacity="0.7"/>
<path d="M815.8 687 L815.8 692" stroke="#c4bfac" stroke-width="2" opacity="0.7"/>
<path d="M821.3 683.5 L821.3 688.5" stroke="#c4bfac" stroke-width="2" opacity="0.7"/>
<path d="M826.8 680 L826.8 685" stroke="#c4bfac" stroke-width="2" opacity="0.7"/>
<path d="M832.3 676.6 L832.3 681.6" stroke="#c4bfac" stroke-width="2" opacity="0.7"/>
<path d="M837.8 673.1 L837.8 678.1" stroke="#c4bfac" stroke-width="2" opacity="0.7"/>
<path d="M843.3 669.6 L843.3 674.6" stroke="#c4bfac" stroke-width="2" opacity="0.7"/>
<path d="M848.8 666.1 L848.8 671.1" stroke="#c4bfac" stroke-width="2" opacity="0.7"/>
<path d="M854.3 662.7 L854.3 667.7" stroke="#c4bfac" stroke-width="2" opacity="0.7"/>
<path d="M859.8 659.2 L859.8 664.2" stroke="#c4bfac" stroke-width="2" opacity="0.7"/>
<path d="M865.3 655.7 L865.3 660.7" stroke="#c4bfac" stroke-width="2" opacity="0.7"/>
<path d="M870.8 652.2 L870.8 657.2" stroke="#c4bfac" stroke-width="2" opacity="0.7"/>
<path d="M876.3 648.8 L876.3 653.8" stroke="#c4bfac" stroke-width="2" opacity="0.7"/>
<path d="M881.8 645.3 L881.8 650.3" stroke="#c4bfac" stroke-width="2" opacity="0.7"/>
<path d="M887.3 641.8 L887.3 646.8" stroke="#c4bfac" stroke-width="2" opacity="0.7"/>
<path d="M892.8 638.3 L892.8 643.3" stroke="#c4bfac" stroke-width="2" opacity="0.7"/>
<path d="M898.3 634.9 L898.3 639.9" stroke="#c4bfac" stroke-width="2" opacity="0.7"/>
<path d="M903.8 631.4 L903.8 636.4" stroke="#c4bfac" stroke-width="2" opacity="0.7"/>
<path d="M909.3 627.9 L909.3 632.9" stroke="#c4bfac" stroke-width="2" opacity="0.7"/>
<path d="M803.8 692.1 L918 619.9" stroke="#ede6d8" stroke-width="2.8"/>
<path d="M803.8 694.3 L918 622.1" stroke="#a48c78" stroke-width="1.1"/>
<path d="M616.6 815.4 L756.5 727 L756.5 738 L616.6 825.4 Z" fill="#4f534c" opacity="0.88"/>
<path d="M616.6 823.4 L756.5 736 L756.5 740 L616.6 827.4 Z" fill="#6a6a5c" opacity="0.4"/>
<path d="M616.6 811.9 L756.5 723.5 L756.5 729 L616.6 817.4 Z" fill="#8f8c78"/>
<path d="M617.6 812.3 L617.6 817.3" stroke="#c4bfac" stroke-width="2" opacity="0.7"/>
<path d="M623.1 808.8 L623.1 813.8" stroke="#c4bfac" stroke-width="2" opacity="0.7"/>
<path d="M628.6 805.3 L628.6 810.3" stroke="#c4bfac" stroke-width="2" opacity="0.7"/>
<path d="M634.1 801.8 L634.1 806.8" stroke="#c4bfac" stroke-width="2" opacity="0.7"/>
<path d="M639.6 798.4 L639.6 803.4" stroke="#c4bfac" stroke-width="2" opacity="0.7"/>
<path d="M645.1 794.9 L645.1 799.9" stroke="#c4bfac" stroke-width="2" opacity="0.7"/>
<path d="M650.6 791.4 L650.6 796.4" stroke="#c4bfac" stroke-width="2" opacity="0.7"/>
<path d="M656.1 787.9 L656.1 792.9" stroke="#c4bfac" stroke-width="2" opacity="0.7"/>
<path d="M661.6 784.4 L661.6 789.4" stroke="#c4bfac" stroke-width="2" opacity="0.7"/>
<path d="M667.1 781 L667.1 786" stroke="#c4bfac" stroke-width="2" opacity="0.7"/>
<path d="M672.6 777.5 L672.6 782.5" stroke="#c4bfac" stroke-width="2" opacity="0.7"/>
<path d="M678.1 774 L678.1 779" stroke="#c4bfac" stroke-width="2" opacity="0.7"/>
<path d="M683.6 770.5 L683.6 775.5" stroke="#c4bfac" stroke-width="2" opacity="0.7"/>
<path d="M689.1 767.1 L689.1 772.1" stroke="#c4bfac" stroke-width="2" opacity="0.7"/>
<path d="M694.6 763.6 L694.6 768.6" stroke="#c4bfac" stroke-width="2" opacity="0.7"/>
<path d="M700.1 760.1 L700.1 765.1" stroke="#c4bfac" stroke-width="2" opacity="0.7"/>
<path d="M705.6 756.6 L705.6 761.6" stroke="#c4bfac" stroke-width="2" opacity="0.7"/>
<path d="M711.1 753.2 L711.1 758.2" stroke="#c4bfac" stroke-width="2" opacity="0.7"/>
<path d="M716.6 749.7 L716.6 754.7" stroke="#c4bfac" stroke-width="2" opacity="0.7"/>
<path d="M722.1 746.2 L722.1 751.2" stroke="#c4bfac" stroke-width="2" opacity="0.7"/>
<path d="M727.6 742.7 L727.6 747.7" stroke="#c4bfac" stroke-width="2" opacity="0.7"/>
<path d="M733.1 739.3 L733.1 744.3" stroke="#c4bfac" stroke-width="2" opacity="0.7"/>
<path d="M738.6 735.8 L738.6 740.8" stroke="#c4bfac" stroke-width="2" opacity="0.7"/>
<path d="M744.1 732.3 L744.1 737.3" stroke="#c4bfac" stroke-width="2" opacity="0.7"/>
<path d="M749.6 728.8 L749.6 733.8" stroke="#c4bfac" stroke-width="2" opacity="0.7"/>
<path d="M616.6 810.4 L756.5 722" stroke="#ede6d8" stroke-width="2.8"/>
<path d="M616.6 812.6 L756.5 724.2" stroke="#a48c78" stroke-width="1.1"/>
<path d="M498 890.3 L576.5 840.7 L576.5 851.7 L498 900.3 Z" fill="#4f534c" opacity="0.88"/>
<path d="M498 898.3 L576.5 849.7 L576.5 853.7 L498 902.3 Z" fill="#6a6a5c" opacity="0.4"/>
<path d="M498 886.8 L576.5 837.2 L576.5 842.7 L498 892.3 Z" fill="#8f8c78"/>
<path d="M499 887.2 L499 892.2" stroke="#c4bfac" stroke-width="2" opacity="0.7"/>
<path d="M504.5 883.7 L504.5 888.7" stroke="#c4bfac" stroke-width="2" opacity="0.7"/>
<path d="M510 880.3 L510 885.3" stroke="#c4bfac" stroke-width="2" opacity="0.7"/>
<path d="M515.5 876.8 L515.5 881.8" stroke="#c4bfac" stroke-width="2" opacity="0.7"/>
<path d="M521 873.3 L521 878.3" stroke="#c4bfac" stroke-width="2" opacity="0.7"/>
<path d="M526.5 869.8 L526.5 874.8" stroke="#c4bfac" stroke-width="2" opacity="0.7"/>
<path d="M532 866.4 L532 871.4" stroke="#c4bfac" stroke-width="2" opacity="0.7"/>
<path d="M537.5 862.9 L537.5 867.9" stroke="#c4bfac" stroke-width="2" opacity="0.7"/>
<path d="M543 859.4 L543 864.4" stroke="#c4bfac" stroke-width="2" opacity="0.7"/>
<path d="M548.5 855.9 L548.5 860.9" stroke="#c4bfac" stroke-width="2" opacity="0.7"/>
<path d="M554 852.5 L554 857.5" stroke="#c4bfac" stroke-width="2" opacity="0.7"/>
<path d="M559.5 849 L559.5 854" stroke="#c4bfac" stroke-width="2" opacity="0.7"/>
<path d="M565 845.5 L565 850.5" stroke="#c4bfac" stroke-width="2" opacity="0.7"/>
<path d="M570.5 842 L570.5 847" stroke="#c4bfac" stroke-width="2" opacity="0.7"/>
<path d="M498 885.3 L576.5 835.7" stroke="#ede6d8" stroke-width="2.8"/>
<path d="M498 887.5 L576.5 837.9" stroke="#a48c78" stroke-width="1.1"/>
<linearGradient id="wg1" x1="0" y1="0" x2="1" y2="0"><stop offset="0" stop-color="#5a4a28"/><stop offset="0.55" stop-color="#0b0a04"/><stop offset="1" stop-color="#0b0a04"/></linearGradient>
<path d="M761 734.8 L761 676 C761 660 781.1 648 804 648 L804 709.8 Z" fill="#cfcab6" opacity="0.55"/>
<path d="M764 731.8 L764 676 C764 662 783 652 798 652 L802 652 L802 709.8 Z" fill="url(#wg1)"/>
<path d="M756.7 748.5 L804.7 722.5 L804.7 732.5 L756.7 758.5 Z" fill="#5e5c4e" opacity="0.9"/>
<path d="M756.7 746.5 L804.7 720.5" stroke="#ece5d8" stroke-width="2.6"/>
<path d="M764 731.8 L802 709.8 L803.7 719 L760.7 744.5 Z" fill="#b5ac93" opacity="0.9"/>
<path d="M804.7 691 L804.7 721.5" stroke="#e6dfd0" stroke-width="2.4"/>
<path d="M807.2 694.5 L807.2 728.5" stroke="#77705c" stroke-width="2.4" opacity="0.8"/>
<path d="M758.7 723.8 L758.7 746.5" stroke="#d9d2c2" stroke-width="3"/>
<linearGradient id="wg2" x1="0" y1="0" x2="1" y2="0"><stop offset="0" stop-color="#5b4d2a"/><stop offset="0.55" stop-color="#3a3018"/><stop offset="1" stop-color="#3a3018"/></linearGradient>
<path d="M580.4 851.7 L580.4 796 C580.4 780 598.1 773.5 618 773.5 L618 828.5 Z" fill="#cfcab6" opacity="0.55"/>
<path d="M583.4 848.7 L583.4 796 C583.4 782 599.7 777.5 612 777.5 L616 777.5 L616 828.5 Z" fill="url(#wg2)"/>
<path d="M578 863.5 L616.4 842.4 L616.4 852.4 L578 873.5 Z" fill="#5e5c4e" opacity="0.9"/>
<path d="M578 861.5 L616.4 840.4" stroke="#ece5d8" stroke-width="2.6"/>
<path d="M583.4 848.7 L616 828.5 L615.4 838.9 L582 859.5 Z" fill="#b5ac93" opacity="0.9"/>
<path d="M616.4 810 L616.4 841.4" stroke="#e6dfd0" stroke-width="2.4"/>
<path d="M618.9 813.5 L618.9 848.4" stroke="#77705c" stroke-width="2.4" opacity="0.8"/>
<path d="M580 836.8 L580 861.5" stroke="#d9d2c2" stroke-width="3"/>
<path d="M944.4 803 L773 900" stroke="#6b4f3c" stroke-width="1.6"/>
<path d="M881 838.9 L881 845.9" stroke="#5d4636" stroke-width="1.6"/>
<path d="M792 889.2 L792 896.2" stroke="#5d4636" stroke-width="1.6"/>
</g>
<g fill="none" stroke="#ff1515" stroke-width="2" stroke-linejoin="miter">
<path d="M491 587 L491 550 L511 535.9"/>
<path d="M511 535.9 L511 573.2" stroke-opacity="0.78"/>
<path d="M531 559.4 L531 521.8 L552 507"/>
<path d="M552 507 L552 544.9" stroke-opacity="0.78"/>
<path d="M573 530.4 L573 492.2 L594 477.4"/>
<path d="M594 477.4 L594 515.9" stroke-opacity="0.78"/>
<path d="M615.4 501.2 L615.4 462.3 L638 446.4"/>
<path d="M638 446.4 L638 485.6" stroke-opacity="0.78"/>
<path d="M659.6 470.7 L659.6 431.2 L682.6 415"/>
<path d="M682.6 415 L682.6 454.8" stroke-opacity="0.78"/>
<path d="M705.6 438.9 L705.6 398.8 L729 382.3"/>
<path d="M729 382.3 L729 422.8" stroke-opacity="0.78"/>
<path d="M752.7 406.4 L752.7 365.6 L777 348.4"/>
<path d="M777 348.4 L777 389.7" stroke-opacity="0.78"/>
<path d="M801 373.1 L801 331.5 L827 313.2"/>
<path d="M827 313.2 L827 355.2" stroke-opacity="0.78"/>
<path d="M851.6 338.2 L851.6 295.9 L877 278"/>
<path d="M877 278 L877 320.7" stroke-opacity="0.78"/>
<path d="M903 302.7 L903 259.6 L931 239.9 L931 344"/>
</g>
</svg>
<div class="a" style="left:0px;top:0px;width:1600px;height:25px;background:#535353;"></div>
<div class="a" style="left:0px;top:24px;width:1600px;height:1.5px;background:#3d3d3d;"></div>
<div class="a" style="left:10px;top:4px;width:16px;height:15px;background:#0a1b2b;border:1.5px solid #31c5f0;box-sizing:border-box;border-radius:2px"></div>
<span class="t" style="left:11.7px;top:7.00px;font-size:10px;color:#31c5f0;font-weight:bold;transform:scaleX(1.0299)">Ps</span>
<span class="t" style="left:45.7px;top:6.00px;font-size:12.8px;color:#e4e4e4;transform:scaleX(0.9261)">File</span>
<span class="t" style="left:78.7px;top:6.00px;font-size:12.8px;color:#e4e4e4;transform:scaleX(0.9654)">Edit</span>
<span class="t" style="left:113.2px;top:6.00px;font-size:12.8px;color:#e4e4e4;transform:scaleX(0.9500)">Image</span>
<span class="t" style="left:160.2px;top:6.00px;font-size:12.8px;color:#e4e4e4;transform:scaleX(0.9308)">Layer</span>
<span class="t" style="left:203.7px;top:6.00px;font-size:12.8px;color:#e4e4e4;transform:scaleX(0.9405)">Type</span>
<span class="t" style="left:243.2px;top:6.00px;font-size:12.8px;color:#e4e4e4;transform:scaleX(0.9163)">Select</span>
<span class="t" style="left:289.2px;top:6.00px;font-size:12.8px;color:#e4e4e4;transform:scaleX(0.9776)">Filter</span>
<span class="t" style="left:330.2px;top:6.00px;font-size:12.8px;color:#e4e4e4;transform:scaleX(1.0269)">3D</span>
<span class="t" style="left:360.2px;top:6.00px;font-size:12.8px;color:#e4e4e4;transform:scaleX(0.9486)">View</span>
<span class="t" style="left:399.2px;top:6.00px;font-size:12.8px;color:#e4e4e4;transform:scaleX(0.9909)">Window</span>
<span class="t" style="left:457.2px;top:6.00px;font-size:12.8px;color:#e4e4e4;transform:scaleX(1.0103)">Help</span>
<div class="a" style="left:0px;top:25.5px;width:1600px;height:41px;background:#535353;"></div>
<div class="a" style="left:0px;top:65.5px;width:1600px;height:1.5px;background:#3a3a3a;"></div>
<div class="a" style="left:1598px;top:25px;width:2px;height:42px;background:#3a3a3a;"></div>
<div class="a" style="left:5px;top:36px;width:2px;height:20px;background:repeating-linear-gradient(#484848 0 1px,#5a5a5a 1px 2px)"></div>
<svg class="a" style="left:20px;top:39.5px;" width="16" height="14" viewBox="0 0 16 14"><path d="M8 0.3 L16 7.6 L13.6 7.6 L13.6 13.5 L9.8 13.5 L9.8 9 L6.2 9 L6.2 13.5 L2.4 13.5 L2.4 7.6 L0 7.6 Z" fill="#c6c6c6"/></svg>
<div class="a" style="left:53px;top:31px;width:1px;height:30px;background:#3f3f3f;"></div>
<div class="a" style="left:102.3px;top:31px;width:1px;height:30px;background:#3f3f3f;"></div>
<div class="a" style="left:282.3px;top:31px;width:1px;height:30px;background:#3f3f3f;"></div>
<div class="a" style="left:465.2px;top:31px;width:1px;height:30px;background:#3f3f3f;"></div>
<div class="a" style="left:594.2px;top:31px;width:1px;height:30px;background:#3f3f3f;"></div>
<div class="a" style="left:723.2px;top:31px;width:1px;height:30px;background:#3f3f3f;"></div>
<div class="a" style="left:766.2px;top:31px;width:1px;height:30px;background:#3f3f3f;"></div>
<svg class="a" style="left:61.5px;top:38.5px;" width="16" height="16" viewBox="0 0 16 16"><g fill="none" stroke="#e0e0e0" stroke-width="1.5"><path d="M8 1.5 V14.5 M1.5 8 H14.5"/><path d="M5.6 3.8 L8 1.2 L10.4 3.8 M5.6 12.2 L8 14.8 L10.4 12.2 M3.8 5.6 L1.2 8 L3.8 10.4 M12.2 5.6 L14.8 8 L12.2 10.4"/></g></svg>
<svg class="a" style="left:87px;top:44.5px;" width="8" height="5" viewBox="0 0 8 5"><path d="M0.7 0.7 L4 4 L7.3 0.7" fill="none" stroke="#cfcfcf" stroke-width="1.2"/></svg>
<div class="a" style="left:110.5px;top:40.5px;width:12px;height:12px;background:#4a4a4a;border:1px solid #8a8a8a;box-sizing:border-box;border-radius:2.5px"></div>
<span class="t" style="left:128.2px;top:40.00px;font-size:13px;color:#e4e4e4;transform:scaleX(0.9615)">Auto-Select:</span>
<div class="a" style="left:212.5px;top:36px;width:61px;height:21.5px;background:#484848;border:1px solid #6a6a6a;box-sizing:border-box;border-radius:3.5px"></div>
<span class="t" style="left:221.2px;top:40.00px;font-size:13px;color:#e4e4e4;transform:scaleX(0.9867)">Layer</span>
<svg class="a" style="left:261.5px;top:44.5px;" width="9" height="6" viewBox="0 0 9 6"><path d="M0.8 0.8 L4.5 4.6 L8.2 0.8" fill="none" stroke="#cfcfcf" stroke-width="1.3"/></svg>
<div class="a" style="left:291px;top:40.5px;width:12px;height:12px;background:#4a4a4a;border:1px solid #8a8a8a;box-sizing:border-box;border-radius:2.5px"></div>
<span class="t" style="left:309.2px;top:40.00px;font-size:13px;color:#e4e4e4;transform:scaleX(0.9654)">Show Transform Controls</span>
<svg class="a" style="left:481px;top:38px;" width="14" height="15" viewBox="0 0 14 15"><rect x="0" y="0" width="1.2" height="15" fill="#9c9c9c"/><rect x="2.6" y="3" width="6.5" height="3.6" fill="#9c9c9c"/><rect x="2.6" y="8.6" width="10.6" height="3.6" fill="#9c9c9c"/></svg>
<svg class="a" style="left:508px;top:38px;" width="12" height="15" viewBox="0 0 12 15"><rect x="5.4" y="0" width="1.2" height="15" fill="#9c9c9c"/><rect x="2.4" y="3" width="7.2" height="3.6" fill="#9c9c9c"/><rect x="0.4" y="8.6" width="11.2" height="3.6" fill="#9c9c9c"/></svg>
<svg class="a" style="left:532px;top:38px;" width="14" height="15" viewBox="0 0 14 15"><rect x="12.4" y="0" width="1.2" height="15" fill="#9c9c9c"/><rect x="4.6" y="3" width="6.5" height="3.6" fill="#9c9c9c"/><rect x="0.4" y="8.6" width="10.6" height="3.6" fill="#9c9c9c"/></svg>
<svg class="a" style="left:565px;top:40.5px;" width="16" height="11" viewBox="0 0 16 11"><rect x="0" y="0" width="16" height="1.2" fill="#9c9c9c"/><rect x="0" y="9.6" width="16" height="1.2" fill="#9c9c9c"/><rect x="3.2" y="3.4" width="9.6" height="4" fill="#9c9c9c"/></svg>
<svg class="a" style="left:609px;top:39.5px;" width="14" height="14" viewBox="0 0 14 14"><rect x="0" y="0" width="14" height="1.2" fill="#9c9c9c"/><rect x="2.4" y="2.6" width="3.6" height="10.6" fill="#9c9c9c"/><rect x="8" y="2.6" width="3.6" height="6.5" fill="#9c9c9c"/></svg>
<svg class="a" style="left:635px;top:40px;" width="14" height="12" viewBox="0 0 14 12"><rect x="0" y="5.4" width="14" height="1.2" fill="#9c9c9c"/><rect x="2.4" y="0.4" width="3.6" height="11.2" fill="#9c9c9c"/><rect x="8" y="2.4" width="3.6" height="7.2" fill="#9c9c9c"/></svg>
<svg class="a" style="left:661px;top:38.5px;" width="14" height="14" viewBox="0 0 14 14"><rect x="0" y="12.6" width="14" height="1.2" fill="#9c9c9c"/><rect x="2.4" y="0.4" width="3.6" height="10.6" fill="#9c9c9c"/><rect x="8" y="4.6" width="3.6" height="6.5" fill="#9c9c9c"/></svg>
<svg class="a" style="left:697px;top:38px;" width="11" height="16" viewBox="0 0 11 16"><rect x="0" y="0" width="1.2" height="16" fill="#9c9c9c"/><rect x="9.6" y="0" width="1.2" height="16" fill="#9c9c9c"/><rect x="3.4" y="3.2" width="4" height="9.6" fill="#9c9c9c"/></svg>
<svg class="a" style="left:737px;top:44px;" width="17" height="4" viewBox="0 0 17 4"><circle cx="2" cy="2" r="1.9" fill="#d4d4d4"/><circle cx="8.5" cy="2" r="1.9" fill="#d4d4d4"/><circle cx="15" cy="2" r="1.9" fill="#d4d4d4"/></svg>
<span class="t" style="left:776.2px;top:39.00px;font-size:13px;color:#8c8c8c;transform:scaleX(0.9685)">3D Mode:</span>
<svg class="a" style="left:844px;top:37.5px;" width="20" height="16" viewBox="0 0 20 16"><g fill="none" stroke="#909090" stroke-width="1.4"><ellipse cx="12" cy="5.6" rx="4.6" ry="4.4"/><path d="M8 6 C3 6.5 1 9 3.5 11.3 C7 14 15 14 18.2 11 C19.5 9.5 18.5 8 16.5 7.2"/></g><path d="M2.6 13.8 L8.2 13.2 L4.6 9.6 Z" fill="#909090"/></svg>
<svg class="a" style="left:871.5px;top:37.5px;" width="17" height="16" viewBox="0 0 17 16"><g fill="none" stroke="#909090" stroke-width="1.3"><circle cx="8.8" cy="8.3" r="3.9"/><path d="M3.2 3.8 A7.4 7.4 0 1 0 8.8 0.9"/></g><path d="M1 1.8 L5.8 2.4 L2.4 6.4 Z" fill="#909090"/></svg>
<svg class="a" style="left:897px;top:37.5px;" width="17" height="16" viewBox="0 0 17 16"><path d="M8.5 0.6 L11.4 3.8 H9.6 V7 H12.9 V5.2 L16.2 8 L12.9 10.8 V9 H9.6 V12.2 H11.4 L8.5 15.4 L5.6 12.2 H7.4 V9 H4.1 V10.8 L0.8 8 L4.1 5.2 V7 H7.4 V3.8 H5.6 Z" fill="none" stroke="#909090" stroke-width="1.2"/></svg>
<svg class="a" style="left:922.5px;top:37.5px;" width="19" height="16" viewBox="0 0 19 16"><circle cx="9.5" cy="7.4" r="3" fill="none" stroke="#909090" stroke-width="1.3"/><path d="M9.5 0 L12 3 H7 Z M0.6 7.4 L4 4.9 V9.9 Z M18.4 7.4 L15 4.9 V9.9 Z M9.5 15.6 L5.6 11.8 H8 V10.8 H11 V11.8 H13.4 Z" fill="#909090"/></svg>
<svg class="a" style="left:949px;top:40px;" width="19" height="11" viewBox="0 0 19 11"><rect x="0" y="1.6" width="8.6" height="7.8" rx="0.8" fill="#909090"/><path d="M8.6 4 L11.6 2 V9 L8.6 7 Z" fill="#909090"/><path d="M17.6 0.6 L13.4 5.5 L17.6 10.4" fill="none" stroke="#909090" stroke-width="1.2"/></svg>
<svg class="a" style="left:1531px;top:37.5px;" width="17" height="17" viewBox="0 0 17 17"><circle cx="7.3" cy="7.3" r="5.6" fill="none" stroke="#d6d6d6" stroke-width="1.6"/><path d="M11.4 11.4 L15.8 15.8" stroke="#d6d6d6" stroke-width="2" stroke-linecap="round"/></svg>
<svg class="a" style="left:1561px;top:40px;" width="16" height="13" viewBox="0 0 16 13"><rect x="0.6" y="0.6" width="14.8" height="11.8" fill="none" stroke="#d6d6d6" stroke-width="1.2"/><rect x="0.6" y="0.6" width="14.8" height="2" fill="#d6d6d6"/><rect x="2.4" y="3.6" width="2.4" height="1.8" fill="#d6d6d6"/><rect x="2.4" y="6.2" width="2.4" height="1.8" fill="#d6d6d6"/><rect x="2.4" y="8.8" width="2.4" height="1.8" fill="#d6d6d6"/></svg>
<svg class="a" style="left:1586.5px;top:43.5px;" width="8" height="5" viewBox="0 0 8 5"><path d="M0.6 0.6 L4 4 L7.4 0.6" fill="none" stroke="#cfcfcf" stroke-width="1.1"/></svg>
<div class="a" style="left:0px;top:67px;width:39px;height:711px;background:#535353;"></div>
<div class="a" style="left:0px;top:67px;width:39px;height:11px;background:#424242;"></div>
<div class="a" style="left:0px;top:78px;width:39px;height:1px;background:#3a3a3a;"></div>
<div class="a" style="left:38px;top:67px;width:1px;height:711px;background:#3f3f3f;"></div>
<div class="a" style="left:0px;top:67px;width:1px;height:711px;background:#404040;"></div>
<div class="a" style="left:0px;top:777px;width:39px;height:1px;background:#3a3a3a;"></div>
<svg class="a" style="left:5.5px;top:69.5px;" width="9" height="6" viewBox="0 0 9 6"><path d="M0.4 0.3 L3.6 3 L0.4 5.7 Z M4.6 0.3 L7.8 3 L4.6 5.7 Z" fill="#cfcfcf"/></svg>
<div class="a" style="left:10px;top:82px;width:19.5px;height:4px;background:repeating-linear-gradient(90deg,#404040 0 1px,#5c5c5c 1px 2px)"></div>
<div class="a" style="left:4px;top:95.5px;width:31px;height:24.5px;background:#383838;border-radius:3px;box-shadow:0 0 0 0.5px #4a4a4a"></div>
<svg class="a" style="left:9.5px;top:98px;" width="20" height="20" viewBox="0 0 20 20"><g fill="none" stroke="#dadada" stroke-width="1.6"><path d="M10 3.5 V16.5 M3.5 10 H16.5"/></g><path d="M10 1.6 L13 5.2 H7 Z M10 18.4 L13 14.8 H7 Z M1.6 10 L5.2 7 V13 Z M18.4 10 L14.8 7 V13 Z" fill="#dadada"/></svg>
<svg class="a" style="left:30px;top:114.5px;" width="3.5" height="3.5" viewBox="0 0 3.5 3.5"><path d="M3.5 0 V3.5 H0 Z" fill="#bdbdbd"/></svg>
<svg class="a" style="left:9.5px;top:123.5px;" width="20" height="20" viewBox="0 0 20 20"><rect x="2.8" y="3.6" width="14.8" height="12.4" fill="none" stroke="#dadada" stroke-width="1.5" stroke-dasharray="3.4 2.2"/></svg>
<svg class="a" style="left:30px;top:140px;" width="3.5" height="3.5" viewBox="0 0 3.5 3.5"><path d="M3.5 0 V3.5 H0 Z" fill="#bdbdbd"/></svg>
<svg class="a" style="left:9.5px;top:149.5px;" width="20" height="20" viewBox="0 0 20 20"><path d="M2.6 3.4 L10 7.4 L17.4 2.2 L16.6 11.8 L8.6 13.6 Z" fill="none" stroke="#dadada" stroke-width="1.3" stroke-linejoin="round"/><circle cx="7.6" cy="13.6" r="1.7" fill="none" stroke="#dadada" stroke-width="1.2"/><path d="M6.4 14.8 L3 17.4 M8 15.2 L6.6 18.6" stroke="#dadada" stroke-width="1.2"/></svg>
<svg class="a" style="left:30px;top:166px;" width="3.5" height="3.5" viewBox="0 0 3.5 3.5"><path d="M3.5 0 V3.5 H0 Z" fill="#bdbdbd"/></svg>
<svg class="a" style="left:9.5px;top:175.5px;" width="20" height="20" viewBox="0 0 20 20"><path d="M3.4 17 L12.6 6.6" stroke="#dadada" stroke-width="3.4" stroke-linecap="round"/><path d="M11 8.2 L12.2 9.4" stroke="#535353" stroke-width="1"/><g stroke="#dadada" stroke-width="1.1"><path d="M8.6 1.6 V5.2 M6.8 3.4 H10.4"/><path d="M15.4 0.8 V4.8 M13.4 2.8 H17.4"/><path d="M16.6 7.6 V11.2 M14.8 9.4 H18.4"/></g></svg>
<svg class="a" style="left:30px;top:192px;" width="3.5" height="3.5" viewBox="0 0 3.5 3.5"><path d="M3.5 0 V3.5 H0 Z" fill="#bdbdbd"/></svg>
<svg class="a" style="left:9.5px;top:201.5px;" width="20" height="20" viewBox="0 0 20 20"><g fill="none" stroke="#dadada" stroke-width="1.9"><path d="M5.6 1.6 V14.4 H18.4"/><path d="M1.6 5.6 H14.4 V18.4"/></g></svg>
<svg class="a" style="left:30px;top:218px;" width="3.5" height="3.5" viewBox="0 0 3.5 3.5"><path d="M3.5 0 V3.5 H0 Z" fill="#bdbdbd"/></svg>
<svg class="a" style="left:9.5px;top:228px;" width="20" height="20" viewBox="0 0 20 20"><g fill="none" stroke="#dadada" stroke-width="1.4"><rect x="2.6" y="3.2" width="14.8" height="13.6"/><path d="M2.6 3.2 L17.4 16.8 M17.4 3.2 L2.6 16.8"/></g><g fill="#dadada"><rect x="1.4" y="2" width="2.6" height="2.6"/><rect x="16" y="2" width="2.6" height="2.6"/><rect x="1.4" y="15.4" width="2.6" height="2.6"/><rect x="16" y="15.4" width="2.6" height="2.6"/></g></svg>
<svg class="a" style="left:9.5px;top:254px;" width="20" height="20" viewBox="0 0 20 20"><path d="M3 17 L4 13.6 L11 6.6 L13.4 9 L6.4 16 Z" fill="none" stroke="#dadada" stroke-width="1.4" stroke-linejoin="round"/><path d="M10.2 5 L15 9.8" stroke="#dadada" stroke-width="2.2" stroke-linecap="round"/><path d="M12.6 7.4 L15.6 4.4" stroke="#dadada" stroke-width="3.6" stroke-linecap="round"/></svg>
<svg class="a" style="left:30px;top:270.5px;" width="3.5" height="3.5" viewBox="0 0 3.5 3.5"><path d="M3.5 0 V3.5 H0 Z" fill="#bdbdbd"/></svg>
<svg class="a" style="left:9.5px;top:280.5px;" width="20" height="20" viewBox="0 0 20 20"><rect x="4" y="5" width="12.4" height="10.4" rx="2" fill="#8a8a8a" stroke="#dadada" stroke-width="1.3"/><g stroke="#dadada" stroke-width="1.3"><path d="M6.6 2.2 V5 M10.2 2.2 V5 M13.8 2.2 V5 M6.6 15.4 V18.2 M10.2 15.4 V18.2 M13.8 15.4 V18.2 M1.4 7.6 H4 M1.4 10.2 H4 M1.4 12.8 H4 M16.4 7.6 H19 M16.4 10.2 H19 M16.4 12.8 H19"/></g></svg>
<svg class="a" style="left:30px;top:297px;" width="3.5" height="3.5" viewBox="0 0 3.5 3.5"><path d="M3.5 0 V3.5 H0 Z" fill="#bdbdbd"/></svg>
<svg class="a" style="left:9.5px;top:306.7px;" width="20" height="20" viewBox="0 0 20 20"><path d="M16.4 1.6 L18 3.2 L11 13 L8.8 11 Z" fill="#dadada"/><path d="M8.2 12 C6 12 4.6 13.4 4.4 15.2 C4.2 16.6 3.2 17.2 2.2 17.6 C5 18.6 9 17.8 10.2 14.4 Z" fill="#dadada"/></svg>
<svg class="a" style="left:30px;top:323.2px;" width="3.5" height="3.5" viewBox="0 0 3.5 3.5"><path d="M3.5 0 V3.5 H0 Z" fill="#bdbdbd"/></svg>
<svg class="a" style="left:9.5px;top:332.5px;" width="20" height="20" viewBox="0 0 20 20"><circle cx="10" cy="5.2" r="3.1" fill="#dadada"/><path d="M8.4 7 H11.6 L12.2 11.4 H16.4 V14.6 H3.6 V11.4 H7.8 Z" fill="#dadada"/><rect x="3.6" y="16" width="12.8" height="1.5" fill="#dadada"/></svg>
<svg class="a" style="left:30px;top:349px;" width="3.5" height="3.5" viewBox="0 0 3.5 3.5"><path d="M3.5 0 V3.5 H0 Z" fill="#bdbdbd"/></svg>
<svg class="a" style="left:9.5px;top:358px;" width="20" height="20" viewBox="0 0 20 20"><path d="M17.4 2.6 L10.6 11 L12.2 12.4 Z" fill="#dadada"/><path d="M9.8 11.6 C7.8 11.6 6.6 12.8 6.4 14.4 C6.2 15.8 5.2 16.6 4.2 17 C7 18 10.6 17.2 11.6 14 Z" fill="#dadada"/><path d="M2 6.6 C4 3.6 8 3 11 4.6" fill="none" stroke="#dadada" stroke-width="1.3"/><path d="M0.8 7.8 L5.6 7.4 L2.4 3.8 Z" fill="#dadada"/><path d="M15 9 C16.4 11.4 16.2 14.4 14 16.6" fill="none" stroke="#dadada" stroke-width="1.1" stroke-dasharray="1.2 1.4"/></svg>
<svg class="a" style="left:30px;top:374.5px;" width="3.5" height="3.5" viewBox="0 0 3.5 3.5"><path d="M3.5 0 V3.5 H0 Z" fill="#bdbdbd"/></svg>
<svg class="a" style="left:9.5px;top:385px;" width="20" height="20" viewBox="0 0 20 20"><path d="M11.6 3 L17.2 8.2 L9.6 16 H6.2 L3 12.6 Z" fill="#dadada"/><path d="M3 12.6 L6.2 16 H9.6 L11.8 13.8 L7 8.6 Z" fill="#535353" stroke="#dadada" stroke-width="1.2" stroke-linejoin="round"/><path d="M9.6 16.4 H17.4" stroke="#dadada" stroke-width="1.2"/></svg>
<svg class="a" style="left:30px;top:401.5px;" width="3.5" height="3.5" viewBox="0 0 3.5 3.5"><path d="M3.5 0 V3.5 H0 Z" fill="#bdbdbd"/></svg>
<svg class="a" style="left:9.5px;top:408.7px;" width="20" height="20" viewBox="0 0 20 20"><defs><linearGradient id="tg" x1="0" y1="0" x2="1" y2="0"><stop offset="0" stop-color="#1a1a1a"/><stop offset="1" stop-color="#e6e6e6"/></linearGradient></defs><rect x="2.8" y="3.8" width="15" height="12" fill="url(#tg)" stroke="#dadada" stroke-width="1.3"/></svg>
<svg class="a" style="left:30px;top:425.2px;" width="3.5" height="3.5" viewBox="0 0 3.5 3.5"><path d="M3.5 0 V3.5 H0 Z" fill="#bdbdbd"/></svg>
<svg class="a" style="left:9.5px;top:435px;" width="20" height="20" viewBox="0 0 20 20"><path d="M10 2.2 C11.6 6 15 9 15 12.6 A5 5 0 0 1 5 12.6 C5 9 8.4 6 10 2.2 Z" fill="#dadada"/></svg>
<svg class="a" style="left:30px;top:451.5px;" width="3.5" height="3.5" viewBox="0 0 3.5 3.5"><path d="M3.5 0 V3.5 H0 Z" fill="#bdbdbd"/></svg>
<svg class="a" style="left:9.5px;top:462px;" width="20" height="20" viewBox="0 0 20 20"><circle cx="12" cy="7.6" r="5" fill="#dadada"/><path d="M8.4 11.2 L3 17" stroke="#dadada" stroke-width="2.2" stroke-linecap="round"/></svg>
<svg class="a" style="left:30px;top:478.5px;" width="3.5" height="3.5" viewBox="0 0 3.5 3.5"><path d="M3.5 0 V3.5 H0 Z" fill="#bdbdbd"/></svg>
<svg class="a" style="left:9.5px;top:488.7px;" width="20" height="20" viewBox="0 0 20 20"><path d="M12.2 2.6 L17 6.6 L14.8 9.4 L10 5.4 Z" fill="#dadada"/><path d="M10 6.4 L14 9.8 C13.6 13.4 11 16 3.4 17.4 C4.2 10.6 6.6 7.6 10 6.4 Z" fill="none" stroke="#dadada" stroke-width="1.4" stroke-linejoin="round"/><path d="M3.8 17 L8.6 11.8" stroke="#dadada" stroke-width="1.1"/><circle cx="9.2" cy="11.2" r="1.3" fill="none" stroke="#dadada" stroke-width="1"/></svg>
<svg class="a" style="left:30px;top:505.2px;" width="3.5" height="3.5" viewBox="0 0 3.5 3.5"><path d="M3.5 0 V3.5 H0 Z" fill="#bdbdbd"/></svg>
<svg class="a" style="left:9.5px;top:513.5px;" width="20" height="20" viewBox="0 0 20 20"><path d="M3.8 3 H16.2 V7.2 H14.8 L14.2 4.8 H11.5 V15.2 L13.4 15.7 V17 H6.6 V15.7 L8.5 15.2 V4.8 H5.8 L5.2 7.2 H3.8 Z" fill="#dadada"/></svg>
<svg class="a" style="left:30px;top:530px;" width="3.5" height="3.5" viewBox="0 0 3.5 3.5"><path d="M3.5 0 V3.5 H0 Z" fill="#bdbdbd"/></svg>
<svg class="a" style="left:9.5px;top:539px;" width="20" height="20" viewBox="0 0 20 20"><path d="M5.4 1.6 L15.4 11.4 L10.8 11.6 L13.4 17.4 L11 18.4 L8.6 12.6 L5.4 15.6 Z" fill="#dadada"/></svg>
<svg class="a" style="left:30px;top:555.5px;" width="3.5" height="3.5" viewBox="0 0 3.5 3.5"><path d="M3.5 0 V3.5 H0 Z" fill="#bdbdbd"/></svg>
<svg class="a" style="left:9.5px;top:565.8px;" width="20" height="20" viewBox="0 0 20 20"><ellipse cx="10" cy="10" rx="7.6" ry="6.2" fill="#8a8a8a" stroke="#dadada" stroke-width="1.3"/></svg>
<svg class="a" style="left:30px;top:582.3px;" width="3.5" height="3.5" viewBox="0 0 3.5 3.5"><path d="M3.5 0 V3.5 H0 Z" fill="#bdbdbd"/></svg>
<svg class="a" style="left:9.5px;top:592.4px;" width="20" height="20" viewBox="0 0 20 20"><path d="M6.2 10.4 V4.6 C6.2 3.4 8 3.4 8 4.6 V3 C8 1.8 9.9 1.8 9.9 3 V3 C9.9 1.9 11.8 1.9 11.8 3.2 V4.4 C11.8 3.4 13.6 3.4 13.6 4.6 V6.6 L13.6 12 C13.6 15 12.4 17.6 9.6 17.6 C7.4 17.6 6.2 16.4 4.8 13.8 L2.4 9.8 C1.8 8.6 3.2 7.8 4 8.8 Z" fill="#dadada"/><path d="M8 4.6 V9 M9.9 3 V9 M11.8 4.4 V9" stroke="#535353" stroke-width="0.7"/></svg>
<svg class="a" style="left:30px;top:608.9px;" width="3.5" height="3.5" viewBox="0 0 3.5 3.5"><path d="M3.5 0 V3.5 H0 Z" fill="#bdbdbd"/></svg>
<svg class="a" style="left:9.5px;top:618px;" width="20" height="20" viewBox="0 0 20 20"><circle cx="8.4" cy="8" r="5.8" fill="none" stroke="#dadada" stroke-width="1.7"/><path d="M12.8 12.6 L17.4 17.4" stroke="#dadada" stroke-width="2.2" stroke-linecap="round"/><path d="M6 5.6 A3.6 3.6 0 0 1 10.4 5" fill="none" stroke="#dadada" stroke-width="0.9"/></svg>
<svg class="a" style="left:9.5px;top:644px;" width="20" height="20" viewBox="0 0 20 20"><circle cx="4" cy="10" r="2" fill="#dadada"/><circle cx="10" cy="10" r="2" fill="#dadada"/><circle cx="16" cy="10" r="2" fill="#dadada"/></svg>
<svg class="a" style="left:30px;top:660.5px;" width="3.5" height="3.5" viewBox="0 0 3.5 3.5"><path d="M3.5 0 V3.5 H0 Z" fill="#bdbdbd"/></svg>
<svg class="a" style="left:5px;top:673px;" width="10.5" height="10.5" viewBox="0 0 10.5 10.5"><rect x="3.6" y="3.6" width="6.6" height="6.6" fill="#e8e8e8"/><rect x="0.6" y="0.6" width="6" height="6" fill="#000" stroke="#e8e8e8" stroke-width="1.2"/></svg>
<svg class="a" style="left:22px;top:672.5px;" width="10.5" height="11" viewBox="0 0 10.5 11"><path d="M3 3 H7.6 V7.6" fill="none" stroke="#dadada" stroke-width="1.4"/><path d="M0.2 3 L3.6 0.2 V5.8 Z M7.6 10.8 L4.8 7.4 H10.4 Z" fill="#dadada"/></svg>
<div class="a" style="left:14.6px;top:698px;width:19px;height:19px;background:#ffffff;border:1px solid #3a3a3a;box-sizing:border-box"></div>
<div class="a" style="left:4.6px;top:689px;width:19px;height:18.5px;background:#000000;border:1.2px solid #e6e6e6;box-sizing:border-box;box-shadow:0 0 0 1px #3a3a3a"></div>
<svg class="a" style="left:11px;top:729px;" width="17.4" height="13.4" viewBox="0 0 17.4 13.4"><rect x="0.7" y="0.7" width="16" height="12" fill="none" stroke="#dadada" stroke-width="1.3"/><circle cx="8.7" cy="6.7" r="3.5" fill="none" stroke="#dadada" stroke-width="1.1" stroke-dasharray="1.1 1.3"/></svg>
<svg class="a" style="left:11px;top:755px;" width="17.4" height="13.4" viewBox="0 0 17.4 13.4"><rect x="0.7" y="0.7" width="16" height="12" fill="none" stroke="#dadada" stroke-width="1.3"/><rect x="0.7" y="0.7" width="16" height="2.6" fill="#dadada"/></svg>
<svg class="a" style="left:30px;top:767.5px;" width="3.5" height="3.5" viewBox="0 0 3.5 3.5"><path d="M3.5 0 V3.5 H0 Z" fill="#bdbdbd"/></svg>
<div class="a" style="left:46px;top:68px;width:422px;height:43px;background:#424242;border:1px solid #383838;box-sizing:border-box;border-radius:3px 3px 0 0"></div>
<div class="a" style="left:47px;top:81px;width:420px;height:1px;background:#383838;"></div>
<div class="a" style="left:47px;top:82px;width:101.5px;height:28px;background:#535353;"></div>
<div class="a" style="left:148.5px;top:82px;width:1px;height:28px;background:#383838;"></div>
<div class="a" style="left:212px;top:82px;width:1px;height:28px;background:#383838;"></div>
<span class="t" style="left:56.2px;top:91.00px;font-size:12.6px;color:#f0f0f0;font-weight:bold;transform:scaleX(0.9221)">Brush Settings</span>
<span class="t" style="left:157.7px;top:91.00px;font-size:12.6px;color:#a6a6a6;font-weight:bold;transform:scaleX(0.8947)">Brushes</span>
<svg class="a" style="left:437px;top:72.7px;" width="8" height="6" viewBox="0 0 8 6"><path d="M3.6 0.2 L0.4 3 L3.6 5.8 Z M7.8 0.2 L4.6 3 L7.8 5.8 Z" fill="#cfcfcf"/></svg>
<svg class="a" style="left:455.6px;top:72.2px;" width="7" height="7" viewBox="0 0 7 7"><path d="M0.8 0.8 L6.2 6.2 M6.2 0.8 L0.8 6.2" stroke="#cfcfcf" stroke-width="1.8"/></svg>
<svg class="a" style="left:451.4px;top:92px;" width="10" height="7" viewBox="0 0 10 7"><path d="M0 0.5 H10 M0 2.5 H10 M0 4.5 H10 M0 6.5 H10" stroke="#c8c8c8" stroke-width="1"/></svg>
<div class="a" style="left:94px;top:112px;width:262px;height:552px;background:#535353;border:1px solid #383838;box-sizing:border-box;border-radius:3px 3px 0 0"></div>
<div class="a" style="left:95px;top:113px;width:260px;height:12.5px;background:#424242;border-radius:2px 2px 0 0"></div>
<div class="a" style="left:95px;top:125.3px;width:260px;height:1px;background:#383838;"></div>
<div class="a" style="left:95px;top:126.3px;width:260px;height:27px;background:#424242;"></div>
<div class="a" style="left:95px;top:126.3px;width:78px;height:27.4px;background:#535353;"></div>
<div class="a" style="left:173px;top:126.3px;width:1px;height:27px;background:#383838;"></div>
<span class="t" style="left:104.6px;top:135.00px;font-size:12.6px;color:#f0f0f0;font-weight:bold;transform:scaleX(0.9583)">Properties</span>
<svg class="a" style="left:324.5px;top:116.5px;" width="8" height="6" viewBox="0 0 8 6"><path d="M3.6 0.2 L0.4 3 L3.6 5.8 Z M7.8 0.2 L4.6 3 L7.8 5.8 Z" fill="#cfcfcf"/></svg>
<svg class="a" style="left:343.8px;top:116px;" width="7" height="7" viewBox="0 0 7 7"><path d="M0.8 0.8 L6.2 6.2 M6.2 0.8 L0.8 6.2" stroke="#cfcfcf" stroke-width="1.8"/></svg>
<svg class="a" style="left:339px;top:136px;" width="10" height="7" viewBox="0 0 10 7"><path d="M0 0.5 H10 M0 2.5 H10 M0 4.5 H10 M0 6.5 H10" stroke="#c8c8c8" stroke-width="1"/></svg>
<div class="a" style="left:105.5px;top:160px;width:22.5px;height:22px;background:#383838;border-radius:3px;box-shadow:0 0 0 0.6px #484848"></div>
<svg class="a" style="left:108.5px;top:163.5px;" width="16" height="15" viewBox="0 0 16 15"><g fill="none" stroke="#d8d8d8" stroke-width="1"><rect x="0.5" y="0.5" width="15" height="13.6"/><path d="M5.5 0.5 V14 M10.5 0.5 V14 M0.5 5 H15.5 M0.5 9.6 H15.5"/><path d="M0.6 13.6 C7 13.6 6.4 1 13.8 0.8" stroke-width="1.2"/></g></svg>
<svg class="a" style="left:133px;top:165px;" width="17.6" height="12.6" viewBox="0 0 17.6 12.6"><rect x="0" y="0" width="17.6" height="12.6" fill="#dcdcdc"/><circle cx="8.8" cy="6.3" r="3.9" fill="#484848"/></svg>
<span class="t" style="left:158.7px;top:166.00px;font-size:12.6px;color:#e2e2e2;transform:scaleX(0.9426)">Curves</span>
<div class="a" style="left:95px;top:187px;width:260px;height:1px;background:#404040;"></div>
<div class="a" style="left:339.3px;top:188px;width:15.7px;height:442.5px;background:#4b4b4b;"></div>
<span class="t" style="left:103.6px;top:200.00px;font-size:12.6px;color:#e2e2e2;transform:scaleX(0.9948)">Preset:</span>
<div class="a" style="left:148.5px;top:196.5px;width:183px;height:14.2px;background:#474747;border:1px solid #686868;box-sizing:border-box;border-radius:3px"></div>
<span class="t" style="left:157.2px;top:198.00px;font-size:12.6px;color:#e2e2e2;transform:scaleX(0.9910)">Custom</span>
<svg class="a" style="left:319.5px;top:201.3px;" width="8" height="5" viewBox="0 0 8 5"><path d="M0.6 0.6 L4 4 L7.4 0.6" fill="none" stroke="#cfcfcf" stroke-width="1.1"/></svg>
<svg class="a" style="left:106.5px;top:227.5px;" width="19" height="14.5" viewBox="0 0 19 14.5"><path d="M8.6 2.4 C11 0.6 15.6 0.8 17.4 3.6 C19 6.4 17.8 11 14.4 12.4 C12.4 13.2 10.4 13 9 12.4 L9.6 10.6 L3 10.6 L3 9 L8 9 L8 7.6 L5 7.6 L5 6 L8.6 6 L8.6 4.6 L6 4.6 L6 3 Z" fill="#d8d8d8"/><path d="M3 0.6 L5.4 3.4 H0.6 Z M3 14 L5.4 11.4 H0.6 Z" fill="#d8d8d8"/><path d="M0.4 7.4 H4" stroke="#d8d8d8" stroke-width="1.3"/></svg>
<div class="a" style="left:144.8px;top:224px;width:127.8px;height:21.4px;background:#474747;border:1px solid #686868;box-sizing:border-box;border-radius:3.5px"></div>
<span class="t" style="left:153.2px;top:229.00px;font-size:12.6px;color:#e2e2e2;transform:scaleX(0.8572)">RGB</span>
<svg class="a" style="left:261.5px;top:232.5px;" width="8" height="5" viewBox="0 0 8 5"><path d="M0.6 0.6 L4 4 L7.4 0.6" fill="none" stroke="#cfcfcf" stroke-width="1.1"/></svg>
<div class="a" style="left:282px;top:221.2px;width:49.4px;height:24.2px;background:#474747;border:1px solid #606060;box-sizing:border-box;border-radius:3.5px"></div>
<span class="t" style="left:293.2px;top:228.00px;font-size:12.6px;color:#e2e2e2;transform:scaleX(1.0030)">Auto</span>
<svg class="a" style="left:109.8px;top:259.5px;" width="15" height="17" viewBox="0 0 15 17"><path d="M1.6 15.4 C0.8 14.6 1 13.6 1.8 12.8 L8 6.6 L10.4 9 L4.2 15.2 C3.4 16 2.4 16.2 1.6 15.4 Z" fill="#1a1a1a" stroke="#d8d8d8" stroke-width="1.1"/><path d="M7 4.6 L12.4 10" stroke="#d8d8d8" stroke-width="2.2" stroke-linecap="round"/><path d="M10 7 L12.6 4.4" stroke="#d8d8d8" stroke-width="3.8" stroke-linecap="round"/></svg>
<svg class="a" style="left:109.8px;top:285.7px;" width="15" height="17" viewBox="0 0 15 17"><path d="M1.6 15.4 C0.8 14.6 1 13.6 1.8 12.8 L8 6.6 L10.4 9 L4.2 15.2 C3.4 16 2.4 16.2 1.6 15.4 Z" fill="#808080" stroke="#d8d8d8" stroke-width="1.1"/><path d="M7 4.6 L12.4 10" stroke="#d8d8d8" stroke-width="2.2" stroke-linecap="round"/><path d="M10 7 L12.6 4.4" stroke="#d8d8d8" stroke-width="3.8" stroke-linecap="round"/></svg>
<svg class="a" style="left:109.8px;top:311.7px;" width="15" height="17" viewBox="0 0 15 17"><path d="M1.6 15.4 C0.8 14.6 1 13.6 1.8 12.8 L8 6.6 L10.4 9 L4.2 15.2 C3.4 16 2.4 16.2 1.6 15.4 Z" fill="#e8e8e8" stroke="#d8d8d8" stroke-width="1.1"/><path d="M7 4.6 L12.4 10" stroke="#d8d8d8" stroke-width="2.2" stroke-linecap="round"/><path d="M10 7 L12.6 4.4" stroke="#d8d8d8" stroke-width="3.8" stroke-linecap="round"/></svg>
<div class="a" style="left:102.6px;top:337.8px;width:28.8px;height:24.4px;background:#383838;border-radius:3px;box-shadow:0 0 0 0.6px #4a4a4a"></div>
<svg class="a" style="left:106.5px;top:343.5px;" width="21" height="13" viewBox="0 0 21 13"><path d="M1.6 10.6 C5 -2 9 -2 10.6 5.6 C12.2 13 15.6 12.4 19.4 2.2" fill="none" stroke="#d8d8d8" stroke-width="1.2"/><circle cx="1.6" cy="10.8" r="1.2" fill="#d8d8d8"/><circle cx="19.4" cy="2.4" r="1.2" fill="#d8d8d8"/><circle cx="13.6" cy="10.6" r="1.2" fill="#d8d8d8"/></svg>
<svg class="a" style="left:108.5px;top:367.5px;" width="17" height="17" viewBox="0 0 17 17"><path d="M1.2 15.8 L2.4 11 L11.6 1.8 C12.4 1 13.4 1 14.2 1.8 L15.2 2.8 C16 3.6 16 4.6 15.2 5.4 L6 14.6 Z" fill="none" stroke="#d8d8d8" stroke-width="1.3" stroke-linejoin="round"/><path d="M2.4 11 L6 14.6 M10.4 3 L14 6.6" stroke="#d8d8d8" stroke-width="1.1"/></svg>
<svg class="a" style="left:107px;top:394.5px;" width="21" height="15" viewBox="0 0 21 15"><g fill="none" stroke="#8e8e8e" stroke-width="1.2"><path d="M0.6 3.4 H6"/><path d="M20.4 10.6 H14"/><path d="M3 13.6 C10 13.6 9 1.4 18 1.4"/></g><path d="M9 3.4 L5.4 1 V5.8 Z M11 10.6 L14.6 8.2 V13 Z" fill="#8e8e8e"/></svg>
<svg class="a" style="left:105.8px;top:426px;" width="22" height="12" viewBox="0 0 22 12"><path d="M0 11.4 V1.6 H1.4 V5 H2.6 V0.6 H4 V4.6 H5.2 V1.8 H6.6 V5 H7.8 V2.6 H9.2 V5.4 H10.4 V1 H11.6 V11.4 Z" fill="#d8d8d8"/><path d="M16.4 0.6 L22 11.6 H10.8 Z" fill="#d8d8d8" stroke="#535353" stroke-width="0.8"/><path d="M16.4 4.4 V8.2 M16.4 9.2 V10.6" stroke="#535353" stroke-width="1.5"/></svg>
<div class="a" style="left:145px;top:255px;width:5.6px;height:172.6px;background:linear-gradient(#ffffff,#000000)"></div>
<div class="a" style="left:151px;top:255.6px;width:171.6px;height:171.6px;background:#454545;"></div>
<svg class="a" style="left:151px;top:255.6px;overflow:visible" width="174.6" height="174.6" viewBox="0 0 174.6 174.6"><path d="M0 171.6 L0 171.0 L1 171.0 L2 171.0 L3 171.0 L4 171.0 L5 171.0 L6 171.0 L7 171.0 L8 171.0 L9 171.0 L10 171.0 L11 171.0 L12 171.0 L13 171.0 L14 171.0 L15 171.0 L16 171.0 L17 171.0 L18 171.0 L19 171.0 L20 171.0 L21 171.0 L22 171.0 L23 171.0 L24 171.0 L25 169.7 L26 169.9 L27 169.5 L28 169.8 L29 169.9 L30 169.5 L31 168.9 L32 169.0 L33 169.1 L34 169.7 L35 169.4 L36 169.7 L37 169.8 L38 169.9 L39 169.7 L40 171.0 L41 171.0 L42 171.0 L43 171.0 L44 171.0 L45 171.0 L46 171.0 L47 171.0 L48 171.0 L49 171.0 L50 171.0 L51 171.0 L52 163.6 L53 111.6 L54 0.0 L55 131.6 L56 162.6 L57 168.6 L58 168.8 L59 168.9 L60 169.0 L61 169.7 L62 169.7 L63 169.5 L64 169.5 L65 169.4 L66 169.5 L67 170.4 L68 170.0 L69 170.0 L70 171.0 L71 171.0 L72 171.0 L73 171.0 L74 171.0 L75 171.0 L76 171.0 L77 171.0 L78 171.0 L79 171.0 L80 171.0 L81 171.0 L82 171.0 L83 171.0 L84 171.0 L85 171.0 L86 171.0 L87 171.0 L88 171.0 L89 171.0 L90 171.0 L91 169.8 L92 170.3 L93 169.9 L94 170.5 L95 169.2 L96 169.3 L97 169.8 L98 170.1 L99 169.2 L100 169.7 L101 169.3 L102 169.3 L103 169.8 L104 170.0 L105 169.7 L106 170.0 L107 170.4 L108 170.1 L109 169.4 L110 171.0 L111 171.0 L112 171.0 L113 171.0 L114 171.0 L115 171.0 L116 171.0 L117 171.0 L118 171.0 L119 171.0 L120 171.0 L121 171.0 L122 171.0 L123 171.0 L124 171.0 L125 171.0 L126 171.0 L127 171.0 L128 171.0 L129 171.0 L130 170.4 L131 170.4 L132 170.3 L133 170.3 L134 170.3 L135 170.2 L136 170.2 L137 169.9 L138 170.1 L139 169.9 L140 169.9 L141 169.6 L142 169.7 L143 169.5 L144 169.0 L145 169.2 L146 168.8 L147 168.2 L148 168.8 L149 168.7 L150 168.2 L151 167.1 L152 167.1 L153 167.4 L154 166.9 L155 166.9 L156 165.9 L157 166.5 L158 164.5 L159 163.5 L160 162.8 L161 162.9 L162 161.7 L163 164.2 L164 162.8 L165 159.8 L166 159.9 L167 160.6 L168 155.6 L169 159.6 L170 163.6 L171 166.6 L171.6 171.6 Z" fill="#6c6c6c"/><path d="M54.4 0 V171.6" stroke="#707070" stroke-width="1.3"/><path d="M42.9 0 V171.6 M0 42.9 H171.6" stroke="#383838" stroke-width="1"/><path d="M85.8 0 V171.6 M0 85.8 H171.6" stroke="#383838" stroke-width="1"/><path d="M128.7 0 V171.6 M0 128.7 H171.6" stroke="#383838" stroke-width="1"/><path d="M0 171.6 L171.6 0" stroke="#333" stroke-width="0.9"/><rect x="0.5" y="0.5" width="170.6" height="170.6" fill="none" stroke="#383838" stroke-width="1"/><path d="M170.6 0 V171.6" stroke="#6a6a6a" stroke-width="1.2"/><path d="M0.8 170.8 C30 154 55 141 77.3 124.7 C112 98 140 50 170.4 2.4" fill="none" stroke="#e6e6e6" stroke-width="1.15"/><rect x="74.6" y="122" width="5.6" height="5.6" fill="#fff"/><rect x="167.6" y="-0.4" width="5.4" height="5.4" fill="#454545" stroke="#fff" stroke-width="1.2"/><rect x="-1.4" y="167.6" width="5" height="5" fill="#454545" stroke="#fff" stroke-width="1.2"/></svg>
<div class="a" style="left:151px;top:428.2px;width:171.8px;height:4.6px;background:linear-gradient(90deg,#000000,#ffffff)"></div>
<svg class="a" style="left:144.5px;top:434px;" width="13" height="11.5" viewBox="0 0 13 11.5"><path d="M6.5 0.8 L11.6 7 C12.6 8.4 11.8 10.6 10 10.6 H3 C1.2 10.6 0.4 8.4 1.4 7 Z" fill="#535353" stroke="#1c1c1c" stroke-width="1.3"/></svg>
<svg class="a" style="left:315.8px;top:434px;" width="13" height="11.5" viewBox="0 0 13 11.5"><path d="M6.5 0.8 L11.6 7 C12.6 8.4 11.8 10.6 10 10.6 H3 C1.2 10.6 0.4 8.4 1.4 7 Z" fill="#e4e4e4" stroke="#f4f4f4" stroke-width="1"/></svg>
<span class="t" style="left:133.8px;top:457.00px;font-size:12.6px;color:#e2e2e2;transform:scaleX(1.0788)">Input:</span>
<div class="a" style="left:171.4px;top:451.5px;width:57.6px;height:20.8px;background:#474747;border:1px solid #626262;box-sizing:border-box"></div>
<span class="t" style="left:175.8px;top:456.00px;font-size:12.6px;color:#ececec;transform:scaleX(1.0858)">115</span>
<span class="t" style="left:232.7px;top:457.00px;font-size:12.6px;color:#e2e2e2;transform:scaleX(1.0336)">Output:</span>
<div class="a" style="left:279.4px;top:451.5px;width:54px;height:20.8px;background:#474747;border:1px solid #626262;border-right:none;box-sizing:border-box"></div>
<span class="t" style="left:283.2px;top:456.00px;font-size:12.6px;color:#ececec;transform:scaleX(1.0916)">70</span>
<div class="a" style="left:339.3px;top:440px;width:15.7px;height:40px;background:#4b4b4b;"></div>
<div class="a" style="left:95px;top:630px;width:260px;height:1.2px;background:#3c3c3c;"></div>
<div class="a" style="left:190.6px;top:631.2px;width:27.8px;height:24.2px;background:#424242;"></div>
<div class="a" style="left:277.6px;top:631.2px;width:27.8px;height:24.2px;background:#424242;"></div>
<div class="a" style="left:190px;top:631.2px;width:0.8px;height:24.2px;background:#4a4a4a;"></div>
<div class="a" style="left:218.4px;top:631.2px;width:0.8px;height:24.2px;background:#4a4a4a;"></div>
<div class="a" style="left:277px;top:631.2px;width:0.8px;height:24.2px;background:#4a4a4a;"></div>
<div class="a" style="left:305.4px;top:631.2px;width:0.8px;height:24.2px;background:#4a4a4a;"></div>
<svg class="a" style="left:195.5px;top:637px;" width="17" height="12" viewBox="0 0 17 12"><rect x="7" y="0.6" width="9.4" height="9.8" fill="#d8d8d8"/><path d="M4.6 3.4 H2.4 V8.6" fill="none" stroke="#d8d8d8" stroke-width="1.2"/><path d="M2.4 10.6 L0.2 7.6 H4.6 Z" fill="#d8d8d8"/></svg>
<svg class="a" style="left:224.5px;top:636px;" width="19" height="14" viewBox="0 0 19 14"><g transform="translate(0,0.6)"><path d="M0.4 5 C3 0.6 10.6 0.6 13.2 5 C10.6 9.4 3 9.4 0.4 5 Z" fill="#d8d8d8"/><circle cx="6.8" cy="5" r="2.6" fill="#535353"/><circle cx="7.6" cy="4.2" r="0.9" fill="#d8d8d8"/></g><path d="M14 4 C17.6 6 17.4 10.4 14 12" fill="none" stroke="#d8d8d8" stroke-width="1.3"/><path d="M12.2 13.6 L15.6 13.4 L14 10.2 Z" fill="#d8d8d8"/></svg>
<svg class="a" style="left:255.5px;top:636.5px;" width="14" height="13" viewBox="0 0 14 13"><path d="M3.4 6.6 A4.4 4.4 0 1 1 7.8 10.6" fill="none" stroke="#d8d8d8" stroke-width="1.4"/><path d="M0.6 5 L6 5.4 L3 9 Z" fill="#d8d8d8"/><path d="M1 12.3 H13" stroke="#d8d8d8" stroke-width="1.2"/></svg>
<svg class="a" style="left:284.6px;top:638px;" width="14" height="10" viewBox="0 0 14 10"><path d="M0.4 5 C3 0.6 10.6 0.6 13.2 5 C10.6 9.4 3 9.4 0.4 5 Z" fill="#e2e2e2"/><circle cx="6.8" cy="5" r="2.6" fill="#424242"/><circle cx="7.6" cy="4.2" r="0.9" fill="#e2e2e2"/></svg>
<svg class="a" style="left:314.6px;top:636px;" width="11" height="13.5" viewBox="0 0 11 13.5"><path d="M0.4 2.6 H10.6 M3.6 2.4 V0.8 H7.4 V2.4" fill="none" stroke="#d8d8d8" stroke-width="1.2"/><path d="M1.6 4 H9.4 V13 H1.6 Z" fill="none" stroke="#d8d8d8" stroke-width="1.2"/><path d="M4.2 5.4 V11.6 M6.8 5.4 V11.6" stroke="#d8d8d8" stroke-width="1.1"/></svg>
<div class="a" style="left:95px;top:655.6px;width:260px;height:1.4px;background:#3a3a3a;"></div>
<div class="a" style="left:95px;top:657px;width:260px;height:6px;background:#4e4e4e;"></div>
<div class="a" style="left:215px;top:658.2px;width:19px;height:3.6px;background:repeating-linear-gradient(90deg,#3e3e3e 0 1px,#5a5a5a 1px 2px)"></div>
<div class="a" style="left:1274.6px;top:67px;width:325.4px;height:833px;background:#535353;"></div>
<div class="a" style="left:1234.5px;top:67px;width:365.5px;height:11.4px;background:#424242;"></div>
<div class="a" style="left:1234.5px;top:78.2px;width:365.5px;height:1px;background:#383838;"></div>
<div class="a" style="left:1234px;top:67px;width:1px;height:150px;background:#383838;"></div>
<svg class="a" style="left:1258.6px;top:69.7px;" width="8" height="6" viewBox="0 0 8 6"><path d="M3.6 0.2 L0.4 3 L3.6 5.8 Z M7.8 0.2 L4.6 3 L7.8 5.8 Z" fill="#cfcfcf"/></svg>
<svg class="a" style="left:1585.6px;top:69.7px;" width="8" height="6" viewBox="0 0 8 6"><path d="M0.2 0.2 L3.4 3 L0.2 5.8 Z M4.4 0.2 L7.6 3 L4.4 5.8 Z" fill="#cfcfcf"/></svg>
<div class="a" style="left:1235px;top:79.2px;width:38px;height:137.4px;background:#535353;"></div>
<div class="a" style="left:1235px;top:216.4px;width:39px;height:1px;background:#383838;"></div>
<div class="a" style="left:1273px;top:79px;width:1.6px;height:821px;background:#383838;"></div>
<div class="a" style="left:1243.8px;top:82.2px;width:19.4px;height:3.8px;background:repeating-linear-gradient(90deg,#404040 0 1px,#5c5c5c 1px 2px)"></div>
<div class="a" style="left:1235px;top:146.6px;width:38px;height:1.2px;background:#383838;"></div>
<div class="a" style="left:1243.8px;top:151.6px;width:19.4px;height:3.8px;background:repeating-linear-gradient(90deg,#404040 0 1px,#5c5c5c 1px 2px)"></div>
<span class="t" style="left:1246.8px;top:96.00px;font-size:17.5px;color:#dedede;transform:scaleX(1.1636)">A</span>
<div class="a" style="left:1261.2px;top:94.6px;width:1.3px;height:16.4px;background:#dedede;"></div>
<svg class="a" style="left:1248.6px;top:123px;" width="12" height="15" viewBox="0 0 12 15"><path d="M5.6 0.4 H11.6 V1.8 H10.6 V14.6 H9.2 V1.8 H7.8 V14.6 H6.4 V8 H5.6 C3 8 0.6 6.6 0.6 4.2 C0.6 1.8 3 0.4 5.6 0.4 Z" fill="#dedede"/></svg>
<svg class="a" style="left:1247.6px;top:163px;" width="16.4" height="18" viewBox="0 0 16.4 18"><g fill="none" stroke="#d8d8d8" stroke-width="1.1"><rect x="0.8" y="0.8" width="4.2" height="4.2"/><rect x="0.8" y="6.9" width="4.2" height="4.2"/></g><rect x="0.3" y="13" width="5.2" height="4.6" fill="#d8d8d8"/><path d="M9 14.6 C13.6 12.6 15 7.6 11.6 3.6" fill="none" stroke="#d8d8d8" stroke-width="1.5"/><path d="M8.4 5.4 L12.4 1 L13.4 6 Z" fill="#d8d8d8"/></svg>
<svg class="a" style="left:1245.6px;top:192px;" width="19" height="18" viewBox="0 0 19 18"><path d="M2 15.8 L9.4 8.4" stroke="#d8d8d8" stroke-width="3.2" stroke-linecap="round"/><path d="M9.4 8.4 L16.4 1.6" stroke="#d8d8d8" stroke-width="1.4"/><path d="M1.4 1.6 C3 0.4 5.4 0.8 6.4 2.6 C7 3.8 6.8 5 6.4 5.8 L11.6 10.6 L10 12 L5 7 C3.6 7.4 2 7 1.2 5.6 C0.6 4.4 0.8 3.4 1 3 L3 5 L4.6 3.8 L3.2 1.6 Z" fill="#d8d8d8"/><circle cx="15" cy="12.6" r="2" fill="none" stroke="#d8d8d8" stroke-width="1.2"/><path d="M11 9.6 L13.6 11.4" stroke="#d8d8d8" stroke-width="1.2"/></svg>
<div class="a" style="left:1274.6px;top:79.2px;width:325.4px;height:27.4px;background:#424242;"></div>
<div class="a" style="left:1274.6px;top:106.4px;width:122.4px;height:1px;background:#383838;"></div>
<div class="a" style="left:1452.4px;top:106.4px;width:148px;height:1px;background:#383838;"></div>
<div class="a" style="left:1345px;top:79.2px;width:1px;height:27.2px;background:#383838;"></div>
<div class="a" style="left:1396.6px;top:79.2px;width:1px;height:27.2px;background:#383838;"></div>
<div class="a" style="left:1397.6px;top:79.2px;width:54.6px;height:28.2px;background:#535353;"></div>
<div class="a" style="left:1452.2px;top:79.2px;width:1px;height:27.2px;background:#383838;"></div>
<span class="t" style="left:1284.2px;top:88.00px;font-size:12.6px;color:#a6a6a6;font-weight:bold;transform:scaleX(0.9173)">Channels</span>
<span class="t" style="left:1355.2px;top:88.00px;font-size:12.6px;color:#a6a6a6;font-weight:bold;transform:scaleX(0.9214)">Paths</span>
<span class="t" style="left:1406.7px;top:88.00px;font-size:12.6px;color:#f0f0f0;font-weight:bold;transform:scaleX(0.9009)">Layers</span>
<svg class="a" style="left:1583px;top:89px;" width="10.4" height="7.4" viewBox="0 0 10.4 7.4"><path d="M0 0.5 H10.4 M0 2.6 H10.4 M0 4.7 H10.4 M0 6.8 H10.4" stroke="#c8c8c8" stroke-width="1"/></svg>
<div class="a" style="left:1598.6px;top:67px;width:1.4px;height:833px;background:#3c3c3c;"></div>
<div class="a" style="left:1278.8px;top:115.8px;width:98.8px;height:21.6px;background:#474747;border:1px solid #686868;box-sizing:border-box;border-radius:3.5px"></div>
<svg class="a" style="left:1287px;top:121px;" width="11" height="11" viewBox="0 0 11 11"><circle cx="4.2" cy="4.2" r="3.2" fill="none" stroke="#e6e6e6" stroke-width="1.5"/><path d="M6.6 6.6 L9.8 9.8" stroke="#e6e6e6" stroke-width="2" stroke-linecap="round"/></svg>
<span class="t" style="left:1301.2px;top:120.00px;font-size:13.1px;color:#e2e2e2;transform:scaleX(0.9611)">Kind</span>
<svg class="a" style="left:1366.4px;top:124.6px;" width="8" height="5" viewBox="0 0 8 5"><path d="M0.6 0.8 L4 4 L7.4 0.8" fill="none" stroke="#c8c8c8" stroke-width="1.1"/></svg>
<svg class="a" style="left:1392px;top:121px;" width="12.4" height="10.4" viewBox="0 0 12.4 10.4"><rect x="0.6" y="0.6" width="11.2" height="9.2" fill="none" stroke="#d8d8d8" stroke-width="1.2"/><path d="M2 8.4 L4.4 4.6 L6 6.8 L8 3.8 L10.4 8.4 Z" fill="#d8d8d8"/></svg>
<svg class="a" style="left:1416.6px;top:120.6px;" width="12" height="12" viewBox="0 0 12 12"><circle cx="6" cy="6" r="5.2" fill="none" stroke="#d8d8d8" stroke-width="1.2"/><path d="M2.3 9.7 A5.2 5.2 0 0 0 9.7 2.3 Z" fill="#d8d8d8"/></svg>
<svg class="a" style="left:1442px;top:121.4px;" width="10.4" height="10.6" viewBox="0 0 10.4 10.6"><path d="M0.2 0.2 H10.2 V3.2 H9 L8.6 1.8 H6.2 V8.8 L7.8 9.2 V10.4 H2.6 V9.2 L4.2 8.8 V1.8 H1.8 L1.4 3.2 H0.2 Z" fill="#d8d8d8"/></svg>
<svg class="a" style="left:1464.6px;top:120.6px;" width="12" height="12" viewBox="0 0 12 12"><rect x="1.9" y="1.9" width="8.2" height="8.2" fill="none" stroke="#d8d8d8" stroke-width="1.2"/><g fill="#535353" stroke="#d8d8d8" stroke-width="1"><rect x="0.5" y="0.5" width="2.8" height="2.8"/><rect x="8.7" y="0.5" width="2.8" height="2.8"/><rect x="0.5" y="8.7" width="2.8" height="2.8"/><rect x="8.7" y="8.7" width="2.8" height="2.8"/></g></svg>
<svg class="a" style="left:1490px;top:120.6px;" width="10.6" height="12.4" viewBox="0 0 10.6 12.4"><path d="M3 0.6 H7.4 L10 3.2 V9.6 H3 Z" fill="none" stroke="#d8d8d8" stroke-width="1.1"/><path d="M7.2 0.6 V3.4 H10" fill="none" stroke="#d8d8d8" stroke-width="0.9"/><rect x="0.3" y="6" width="5.4" height="5.8" fill="#d8d8d8"/></svg>
<div class="a" style="left:1515.8px;top:119px;width:8.6px;height:15.6px;background:#484848;border:1px solid #606060;box-sizing:border-box;border-radius:4.3px"></div>
<div class="a" style="left:1515.8px;top:116.8px;width:8.6px;height:8.6px;background:#dcdcdc;border-radius:50%"></div>
<div class="a" style="left:1274.6px;top:140.4px;width:325px;height:1px;background:#404040;"></div>
<div class="a" style="left:1278.8px;top:145.8px;width:127px;height:21.4px;background:#474747;border:1px solid #686868;box-sizing:border-box;border-radius:3.5px"></div>
<span class="t" style="left:1287.2px;top:150.00px;font-size:13.1px;color:#e2e2e2;transform:scaleX(0.9739)">Normal</span>
<svg class="a" style="left:1394.6px;top:154.6px;" width="8" height="5" viewBox="0 0 8 5"><path d="M0.6 0.8 L4 4 L7.4 0.8" fill="none" stroke="#c8c8c8" stroke-width="1.1"/></svg>
<span class="t" style="left:1410.7px;top:149.00px;font-size:13.1px;color:#e2e2e2;transform:scaleX(0.9702)">Opacity:</span>
<div class="a" style="left:1462px;top:145.8px;width:61.4px;height:19px;background:#474747;border:1px solid #646464;box-sizing:border-box;border-radius:3px"></div>
<div class="a" style="left:1508.4px;top:146.6px;width:1px;height:17.4px;background:#646464;"></div>
<span class="t" style="left:1466.7px;top:149.00px;font-size:13.1px;color:#ececec;transform:scaleX(1.0179)">100%</span>
<svg class="a" style="left:1512px;top:153.4px;" width="8" height="5" viewBox="0 0 8 5"><path d="M0.6 0.8 L4 4 L7.4 0.8" fill="none" stroke="#c8c8c8" stroke-width="1.1"/></svg>
<div class="a" style="left:1274.6px;top:170.4px;width:325px;height:1px;background:#404040;"></div>
<span class="t" style="left:1281.2px;top:179.00px;font-size:13.1px;color:#e2e2e2;transform:scaleX(0.9650)">Lock:</span>
<svg class="a" style="left:1319px;top:180px;" width="11.4" height="11.4" viewBox="0 0 11.4 11.4"><rect x="0.5" y="0.5" width="10.4" height="10.4" fill="#8a8a8a" stroke="#9e9e9e" stroke-width="1"/><g fill="#555"><rect x="1" y="1" width="3.2" height="3.2"/><rect x="7.2" y="1" width="3.2" height="3.2"/><rect x="4.1" y="4.1" width="3.2" height="3.2"/><rect x="1" y="7.2" width="3.2" height="3.2"/><rect x="7.2" y="7.2" width="3.2" height="3.2"/></g></svg>
<svg class="a" style="left:1340.6px;top:179.6px;" width="14" height="13" viewBox="0 0 14 13"><path d="M12.4 0.4 L13.8 1.6 L8.4 9.6 L6 7.6 Z" fill="#8a8a8a"/><path d="M5.4 8.2 C3.4 8 2.4 9.4 2.2 10.8 C2 11.8 1.2 12.2 0.4 12.6 C3 13.4 6.6 12.8 7.8 10 Z" fill="#8a8a8a"/></svg>
<svg class="a" style="left:1362px;top:179.4px;" width="13.4" height="13.4" viewBox="0 0 13.4 13.4"><path d="M6.7 2 V11.4 M2 6.7 H11.4" stroke="#d8d8d8" stroke-width="1.2"/><path d="M6.7 0.2 L9 3 H4.4 Z M6.7 13.2 L9 10.4 H4.4 Z M0.2 6.7 L3 4.4 V9 Z M13.2 6.7 L10.4 4.4 V9 Z" fill="#d8d8d8"/></svg>
<svg class="a" style="left:1384px;top:179.6px;" width="14.4" height="14" viewBox="0 0 14.4 14"><g fill="none" stroke="#d8d8d8" stroke-width="1.2"><path d="M3.2 0.4 V13.6 M0.4 3.2 H2 M0.4 11 H14 M11 13.6 V12"/><path d="M3.2 3.2 H8.4 L11 5.8 V11"/><path d="M8.2 3.2 V6 H11"/></g><path d="M12 1.4 L13.6 0.2 M13 3.4 H14.4" stroke="#d8d8d8" stroke-width="0.9"/></svg>
<svg class="a" style="left:1407.6px;top:180px;" width="10.8" height="12.4" viewBox="0 0 10.8 12.4"><path d="M2.6 5.4 V3.4 C2.6 0 8.2 0 8.2 3.4 V5.4" fill="none" stroke="#d8d8d8" stroke-width="1.5"/><rect x="0.4" y="5.2" width="10" height="7" rx="0.8" fill="#d8d8d8"/><rect x="4.7" y="7.6" width="1.5" height="2" fill="#535353"/></svg>
<span class="t" style="left:1436.2px;top:179.00px;font-size:13.1px;color:#e2e2e2;transform:scaleX(0.9620)">Fill:</span>
<div class="a" style="left:1462px;top:175.6px;width:61.4px;height:19px;background:#474747;border:1px solid #646464;box-sizing:border-box;border-radius:3px"></div>
<div class="a" style="left:1508.4px;top:176.4px;width:1px;height:17.4px;background:#646464;"></div>
<span class="t" style="left:1466.7px;top:179.00px;font-size:13.1px;color:#ececec;transform:scaleX(1.0179)">100%</span>
<svg class="a" style="left:1512px;top:183.4px;" width="8" height="5" viewBox="0 0 8 5"><path d="M0.6 0.8 L4 4 L7.4 0.8" fill="none" stroke="#c8c8c8" stroke-width="1.1"/></svg>
<div class="a" style="left:1274.6px;top:202.6px;width:308.8px;height:663.4px;overflow:hidden">
<div class="a" style="left:-1274.6px;top:-202.6px;width:1600px;height:900px">
<div class="a" style="left:1304.4px;top:202.6px;width:1px;height:663.4px;background:#454545;"></div>
<div class="a" style="left:1305.4px;top:510.4px;width:278px;height:43.2px;background:#6b6b6b;"></div>
<div class="a" style="left:1274.6px;top:397.2px;width:29.8px;height:182.4px;background:#b34040;"></div>
<div class="a" style="left:1274.6px;top:752.4px;width:29.8px;height:43.2px;background:#656565;"></div>
<div class="a" style="left:1274.6px;top:220.4px;width:309px;height:1px;background:#454545;"></div>
<div class="a" style="left:1274.6px;top:264.4px;width:309px;height:1px;background:#454545;"></div>
<div class="a" style="left:1274.6px;top:308.4px;width:309px;height:1px;background:#454545;"></div>
<div class="a" style="left:1274.6px;top:352.3px;width:309px;height:1px;background:#454545;"></div>
<div class="a" style="left:1274.6px;top:396.3px;width:309px;height:1px;background:#454545;"></div>
<div class="a" style="left:1274.6px;top:421.4px;width:309px;height:1px;background:#454545;"></div>
<div class="a" style="left:1274.6px;top:465.6px;width:309px;height:1px;background:#454545;"></div>
<div class="a" style="left:1274.6px;top:509.4px;width:309px;height:1px;background:#454545;"></div>
<div class="a" style="left:1274.6px;top:553.5px;width:309px;height:1px;background:#454545;"></div>
<div class="a" style="left:1274.6px;top:578.6px;width:309px;height:1px;background:#454545;"></div>
<div class="a" style="left:1274.6px;top:603.4px;width:309px;height:1px;background:#454545;"></div>
<div class="a" style="left:1274.6px;top:647.3px;width:309px;height:1px;background:#454545;"></div>
<div class="a" style="left:1274.6px;top:751.5px;width:309px;height:1px;background:#454545;"></div>
<div class="a" style="left:1274.6px;top:795.5px;width:309px;height:1px;background:#454545;"></div>
<div class="a" style="left:1274.6px;top:839.3px;width:309px;height:1px;background:#454545;"></div>
<div class="a" style="left:1274.6px;top:421.4px;width:29.8px;height:1px;background:#9c3a3a;"></div>
<div class="a" style="left:1274.6px;top:465.6px;width:29.8px;height:1px;background:#9c3a3a;"></div>
<div class="a" style="left:1274.6px;top:509.4px;width:29.8px;height:1px;background:#9c3a3a;"></div>
<div class="a" style="left:1274.6px;top:553.5px;width:29.8px;height:1px;background:#9c3a3a;"></div>
<div class="a" style="left:1309.4px;top:180px;width:55.6px;height:36.6px;background-color:#6c6c6c;background-image:linear-gradient(45deg,#8c8c8c 25%,transparent 25%,transparent 75%,#8c8c8c 75%),linear-gradient(45deg,#8c8c8c 25%,transparent 25%,transparent 75%,#8c8c8c 75%);background-size:8px 8px;background-position:0 0,4px 4px;border:1px solid #2c2c2c;box-sizing:border-box"></div>
<div class="a" style="left:1316px;top:181px;width:35px;height:30.4px;background:linear-gradient(115deg,#7c6a48 0%,#a8895e 22%,#c4a67c 45%,#9c8a5c 62%,#b89a70 80%,#8a7650 100%)"></div>
<div class="a" style="left:1318px;top:196px;width:9px;height:9px;background:#6e7a4a;opacity:0.55;border-radius:4px"></div>
<div class="a" style="left:1334px;top:199px;width:10px;height:7px;background:#d8c4a0;opacity:0.5;border-radius:3px"></div>
<div class="a" style="left:1350.4px;top:201px;width:14.6px;height:15.6px;background:#484848;border-left:1px solid #2c2c2c;box-sizing:border-box"></div>
<svg class="a" style="left:1352.8px;top:203.8px;" width="11" height="14" viewBox="0 0 11 14"><path d="M3.2 0.4 H7.4 L10 3 V8.6 H3.2 Z" fill="none" stroke="#e8e8e8" stroke-width="1.1"/><rect x="0.4" y="5.4" width="5.4" height="4" fill="#e8e8e8"/><rect x="0.4" y="10.6" width="5.4" height="1" fill="#e8e8e8"/></svg>
<svg class="a" style="left:1368px;top:192.6px;" width="8.4" height="15" viewBox="0 0 8.4 15"><g fill="none" stroke="#dcdcdc" stroke-width="1.5"><rect x="1.4" y="0.9" width="5.6" height="7" rx="2.8"/><rect x="1.4" y="7.1" width="5.6" height="7" rx="2.8"/></g><path d="M4.2 4.6 V10.4" stroke="#dcdcdc" stroke-width="1.6"/></svg>
<div class="a" style="left:1380px;top:180px;width:55.8px;height:36.6px;background:#000;border:1px solid #2c2c2c;box-sizing:border-box"></div>
<div class="a" style="left:1386px;top:186px;width:43.4px;height:25.2px;background:#fff;"></div>
<span class="t" style="left:1444.8px;top:194.00px;font-size:13.1px;color:#e2e2e2;transform:scaleX(1.0072)">footage</span>
<div class="a" style="left:1284px;top:192px;width:12.2px;height:12px;background:#4f4f4f;border:1px solid #646464;border-top-color:#5a5a5a;box-sizing:border-box"></div>
<div class="a" style="left:1284px;top:238px;width:12.2px;height:12px;background:#4f4f4f;border:1px solid #646464;border-top-color:#5a5a5a;box-sizing:border-box"></div>
<div class="a" style="left:1309.4px;top:226.2px;width:55.6px;height:34.2px;background-color:#6c6c6c;background-image:linear-gradient(45deg,#8c8c8c 25%,transparent 25%,transparent 75%,#8c8c8c 75%),linear-gradient(45deg,#8c8c8c 25%,transparent 25%,transparent 75%,#8c8c8c 75%);background-size:8px 8px;background-position:0 0,4px 4px;border:1px solid #2c2c2c;box-sizing:border-box"></div>
<span class="t" style="left:1374.6px;top:238.00px;font-size:13.1px;color:#e2e2e2;transform:scaleX(0.8859)">GRID</span>
<div class="a" style="left:1284px;top:282px;width:12.2px;height:12px;background:#4f4f4f;border:1px solid #646464;border-top-color:#5a5a5a;box-sizing:border-box"></div>
<div class="a" style="left:1309.4px;top:270.2px;width:55.6px;height:34.2px;background-color:#6c6c6c;background-image:linear-gradient(45deg,#8c8c8c 25%,transparent 25%,transparent 75%,#8c8c8c 75%),linear-gradient(45deg,#8c8c8c 25%,transparent 25%,transparent 75%,#8c8c8c 75%);background-size:8px 8px;background-position:0 0,4px 4px;border:1px solid #2c2c2c;box-sizing:border-box"></div>
<span class="t" style="left:1374.6px;top:282.00px;font-size:13.1px;color:#e2e2e2;transform:scaleX(0.8725)">CORNICIONE</span>
<div class="a" style="left:1573px;top:309.6px;width:10.4px;height:43.6px;background:#454545;"></div>
<div class="a" style="left:1284px;top:325.6px;width:12.2px;height:12px;background:#4f4f4f;border:1px solid #646464;border-top-color:#5a5a5a;box-sizing:border-box"></div>
<div class="a" style="left:1309.4px;top:314.4px;width:55.6px;height:34.2px;background-color:#6c6c6c;background-image:linear-gradient(45deg,#8c8c8c 25%,transparent 25%,transparent 75%,#8c8c8c 75%),linear-gradient(45deg,#8c8c8c 25%,transparent 25%,transparent 75%,#8c8c8c 75%);background-size:8px 8px;background-position:0 0,4px 4px;border:1px solid #2c2c2c;box-sizing:border-box"></div><svg class="a" style="left:1331px;top:322px;" width="4" height="4" viewBox="0 0 4 4"><path d="M1 3 L2 1 L3 2" stroke="#d8b060" stroke-width="0.8" fill="none"/></svg><div class="a" style="left:1350.4px;top:335.4px;width:14.6px;height:13.2px;background:#484848;border-left:1px solid #2c2c2c;border-top:1px solid #2c2c2c;box-sizing:border-box"></div><svg class="a" style="left:1352.8px;top:337.8px;overflow:visible" width="11" height="12" viewBox="0 0 11 12"><path d="M3.2 0.4 H7.4 L10 3 V8.6 H3.2 Z" fill="none" stroke="#e8e8e8" stroke-width="1.1"/><path d="M7.2 0.4 V3.2 H10" fill="none" stroke="#e8e8e8" stroke-width="0.9"/><rect x="0.4" y="5.4" width="5.4" height="4" fill="#e8e8e8"/><rect x="0.4" y="10.6" width="5.4" height="1" fill="#e8e8e8"/></svg>
<svg class="a" style="left:1368px;top:324px;" width="8.4" height="15" viewBox="0 0 8.4 15"><g fill="none" stroke="#dcdcdc" stroke-width="1.5"><rect x="1.4" y="0.9" width="5.6" height="7" rx="2.8"/><rect x="1.4" y="7.1" width="5.6" height="7" rx="2.8"/></g><path d="M4.2 4.6 V10.4" stroke="#dcdcdc" stroke-width="1.6"/></svg>
<div class="a" style="left:1380px;top:314.4px;width:55.8px;height:34.2px;background:#000;border:1px solid #2c2c2c;border-top:1.5px solid #4c4c4c;box-sizing:border-box"></div><svg class="a" style="left:1404px;top:323.4px;" width="4" height="5" viewBox="0 0 4 5"><path d="M2.6 0.2 L3.4 1 L1.6 4.4 L0.8 3.8 Z" fill="#fff"/></svg>
<span class="t" style="left:1445.2px;top:326.00px;font-size:13.1px;color:#e2e2e2;transform:scaleX(0.8860)">MURA_SX_01_BIS</span>
<svg class="a" style="left:1557px;top:326px;" width="14" height="13" viewBox="0 0 14 13"><g fill="none" stroke="#c4c4c4" stroke-width="1.1"><circle cx="8.6" cy="4.8" r="4.2"/><circle cx="4.8" cy="7.8" r="4.2" stroke="#9c9c9c"/></g></svg>
<svg class="a" style="left:1574.4px;top:329.6px;" width="8" height="5" viewBox="0 0 8 5"><path d="M0.6 0.8 L4 4 L7.4 0.8" fill="none" stroke="#c8c8c8" stroke-width="1.1"/></svg>
<svg class="a" style="left:1283.6px;top:371.8px;" width="13.6" height="9.2" viewBox="0 0 13.6 9.2"><path d="M0.3 4.6 C3 0.2 10.6 0.2 13.3 4.6 C10.6 9 3 9 0.3 4.6 Z" fill="#e6e6e6"/><circle cx="6.8" cy="4.6" r="2.6" fill="#535353"/><circle cx="7.7" cy="3.7" r="0.95" fill="#e6e6e6"/></svg>
<div class="a" style="left:1309.4px;top:358.4px;width:55.6px;height:34.2px;background-color:#6c6c6c;background-image:linear-gradient(45deg,#8c8c8c 25%,transparent 25%,transparent 75%,#8c8c8c 75%),linear-gradient(45deg,#8c8c8c 25%,transparent 25%,transparent 75%,#8c8c8c 75%);background-size:8px 8px;background-position:0 0,4px 4px;border:1px solid #2c2c2c;box-sizing:border-box"></div><svg class="a" style="left:1331px;top:366px;" width="4" height="4" viewBox="0 0 4 4"><path d="M1 3 L2 1 L3 2" stroke="#d8b060" stroke-width="0.8" fill="none"/></svg><div class="a" style="left:1350.4px;top:379.4px;width:14.6px;height:13.2px;background:#484848;border-left:1px solid #2c2c2c;border-top:1px solid #2c2c2c;box-sizing:border-box"></div><svg class="a" style="left:1352.8px;top:381.8px;overflow:visible" width="11" height="12" viewBox="0 0 11 12"><path d="M3.2 0.4 H7.4 L10 3 V8.6 H3.2 Z" fill="none" stroke="#e8e8e8" stroke-width="1.1"/><path d="M7.2 0.4 V3.2 H10" fill="none" stroke="#e8e8e8" stroke-width="0.9"/><rect x="0.4" y="5.4" width="5.4" height="4" fill="#e8e8e8"/><rect x="0.4" y="10.6" width="5.4" height="1" fill="#e8e8e8"/></svg>
<svg class="a" style="left:1368px;top:368px;" width="8.4" height="15" viewBox="0 0 8.4 15"><g fill="none" stroke="#dcdcdc" stroke-width="1.5"><rect x="1.4" y="0.9" width="5.6" height="7" rx="2.8"/><rect x="1.4" y="7.1" width="5.6" height="7" rx="2.8"/></g><path d="M4.2 4.6 V10.4" stroke="#dcdcdc" stroke-width="1.6"/></svg>
<div class="a" style="left:1380px;top:358.4px;width:55.8px;height:34.2px;background:#000;border:1px solid #2c2c2c;border-top:1.5px solid #4c4c4c;box-sizing:border-box"></div><svg class="a" style="left:1404px;top:367.4px;" width="4" height="5" viewBox="0 0 4 5"><path d="M2.6 0.2 L3.4 1 L1.6 4.4 L0.8 3.8 Z" fill="#fff"/></svg>
<span class="t" style="left:1445.2px;top:370.00px;font-size:13.1px;color:#e2e2e2;transform:scaleX(0.8643)">MURA_SX_01</span>
<svg class="a" style="left:1283.6px;top:406.4px;" width="13.6" height="9.2" viewBox="0 0 13.6 9.2"><path d="M0.3 4.6 C3 0.2 10.6 0.2 13.3 4.6 C10.6 9 3 9 0.3 4.6 Z" fill="#f2e4e4"/><circle cx="6.8" cy="4.6" r="2.6" fill="#b34040"/><circle cx="7.7" cy="3.7" r="0.95" fill="#f2e4e4"/></svg>
<svg class="a" style="left:1308.8px;top:406.6px;" width="8" height="5" viewBox="0 0 8 5"><path d="M0.6 0.8 L4 4 L7.4 0.8" fill="none" stroke="#c8c8c8" stroke-width="1.1"/></svg>
<svg class="a" style="left:1321px;top:404px;" width="14" height="11.5" viewBox="0 0 14 11.5"><path d="M0.4 1.2 C0.4 0.7 0.8 0.4 1.2 0.4 H5.4 L6.6 2 H13 C13.4 2 13.6 2.3 13.6 2.6 V3.2 H0.4 Z" fill="#e0e0e0"/><rect x="0.4" y="3.9" width="13.2" height="7.2" rx="0.6" fill="#e0e0e0"/></svg>
<span class="t" style="left:1347.2px;top:404.00px;font-size:13.1px;color:#e2e2e2;transform:scaleX(0.9656)">Merli</span>
<svg class="a" style="left:1283.6px;top:440.8px;" width="13.6" height="9.2" viewBox="0 0 13.6 9.2"><path d="M0.3 4.6 C3 0.2 10.6 0.2 13.3 4.6 C10.6 9 3 9 0.3 4.6 Z" fill="#f2e4e4"/><circle cx="6.8" cy="4.6" r="2.6" fill="#b34040"/><circle cx="7.7" cy="3.7" r="0.95" fill="#f2e4e4"/></svg>
<div class="a" style="left:1337.4px;top:427.5px;width:55.6px;height:34.2px;background-color:#6c6c6c;background-image:linear-gradient(45deg,#8c8c8c 25%,transparent 25%,transparent 75%,#8c8c8c 75%),linear-gradient(45deg,#8c8c8c 25%,transparent 25%,transparent 75%,#8c8c8c 75%);background-size:8px 8px;background-position:0 0,4px 4px;border:1px solid #2c2c2c;box-sizing:border-box"></div><div class="a" style="left:1378.4px;top:448.5px;width:14.6px;height:13.2px;background:#484848;border-left:1px solid #2c2c2c;border-top:1px solid #2c2c2c;box-sizing:border-box"></div><svg class="a" style="left:1380.6px;top:450.5px;" width="11.4" height="10.6" viewBox="0 0 11.4 10.6"><rect x="1.8" y="1.8" width="7.8" height="7" fill="none" stroke="#e8e8e8" stroke-width="1.1"/><g fill="#484848" stroke="#e8e8e8" stroke-width="0.9"><circle cx="1.8" cy="1.8" r="1.3"/><circle cx="9.6" cy="1.8" r="1.3"/><circle cx="1.8" cy="8.8" r="1.3"/><circle cx="9.6" cy="8.8" r="1.3"/></g></svg>
<span class="t" style="left:1402.2px;top:439.00px;font-size:13.1px;color:#e2e2e2;transform:scaleX(0.8729)">SHAPEMERLI_LT_01</span>
<svg class="a" style="left:1283.6px;top:484.4px;" width="13.6" height="9.2" viewBox="0 0 13.6 9.2"><path d="M0.3 4.6 C3 0.2 10.6 0.2 13.3 4.6 C10.6 9 3 9 0.3 4.6 Z" fill="#f2e4e4"/><circle cx="6.8" cy="4.6" r="2.6" fill="#b34040"/><circle cx="7.7" cy="3.7" r="0.95" fill="#f2e4e4"/></svg>
<div class="a" style="left:1337.4px;top:471.5px;width:55.6px;height:34.2px;background-color:#6c6c6c;background-image:linear-gradient(45deg,#8c8c8c 25%,transparent 25%,transparent 75%,#8c8c8c 75%),linear-gradient(45deg,#8c8c8c 25%,transparent 25%,transparent 75%,#8c8c8c 75%);background-size:8px 8px;background-position:0 0,4px 4px;border:1px solid #2c2c2c;box-sizing:border-box"></div><div class="a" style="left:1378.4px;top:492.5px;width:14.6px;height:13.2px;background:#484848;border-left:1px solid #2c2c2c;border-top:1px solid #2c2c2c;box-sizing:border-box"></div><svg class="a" style="left:1380.8px;top:494.9px;overflow:visible" width="11" height="12" viewBox="0 0 11 12"><path d="M3.2 0.4 H7.4 L10 3 V8.6 H3.2 Z" fill="none" stroke="#e8e8e8" stroke-width="1.1"/><path d="M7.2 0.4 V3.2 H10" fill="none" stroke="#e8e8e8" stroke-width="0.9"/><rect x="0.4" y="5.4" width="5.4" height="4" fill="#e8e8e8"/><rect x="0.4" y="10.6" width="5.4" height="1" fill="#e8e8e8"/></svg>
<svg class="a" style="left:1396px;top:481.4px;" width="8.4" height="15" viewBox="0 0 8.4 15"><g fill="none" stroke="#dcdcdc" stroke-width="1.5"><rect x="1.4" y="0.9" width="5.6" height="7" rx="2.8"/><rect x="1.4" y="7.1" width="5.6" height="7" rx="2.8"/></g><path d="M4.2 4.6 V10.4" stroke="#dcdcdc" stroke-width="1.6"/></svg>
<div class="a" style="left:1408.4px;top:471.5px;width:55.8px;height:34.2px;background:#000;border:1px solid #2c2c2c;border-top:1.5px solid #4c4c4c;box-sizing:border-box"></div>
<span class="t" style="left:1474px;top:483.00px;font-size:13.1px;color:#e2e2e2;transform:scaleX(0.8939)">MERLI_LT_01</span>
<svg class="a" style="left:1283.6px;top:528.4px;" width="13.6" height="9.2" viewBox="0 0 13.6 9.2"><path d="M0.3 4.6 C3 0.2 10.6 0.2 13.3 4.6 C10.6 9 3 9 0.3 4.6 Z" fill="#f2e4e4"/><circle cx="6.8" cy="4.6" r="2.6" fill="#b34040"/><circle cx="7.7" cy="3.7" r="0.95" fill="#f2e4e4"/></svg>
<svg class="a" style="left:1355.6px;top:529.6px;" width="7" height="8.4" viewBox="0 0 7 8.4"><path d="M6 0.8 H2.6 V5.4" fill="none" stroke="#e4e4e4" stroke-width="1.2"/><path d="M2.6 8 L0.2 4.8 H5 Z" fill="#e4e4e4"/></svg>
<svg class="a" style="left:1363px;top:513px;" width="60.4" height="39" viewBox="0 0 60.4 39"><g fill="none" stroke="#f4f4f4" stroke-width="1.3"><path d="M20 0.7 H0.7 V13.6 M0.7 27 V38.3 H20 M39.6 0.7 H59.7 V13.6 M59.7 27 V38.3 H39.6"/></g></svg>
<svg class="a" style="left:1385px;top:526px;" width="16.4" height="13.4" viewBox="0 0 16.4 13.4"><g fill="none" stroke="#c4c4c4" stroke-width="0.9"><rect x="0.5" y="0.5" width="15.4" height="12.4"/><path d="M5.6 0.5 V13 M10.8 0.5 V13 M0.5 4.6 H16 M0.5 8.8 H16"/><path d="M0.6 12.6 C7 12.6 7 1 14.6 0.6" stroke-width="1.1"/></g></svg>
<svg class="a" style="left:1423.8px;top:525.4px;" width="8.4" height="15" viewBox="0 0 8.4 15"><g fill="none" stroke="#dcdcdc" stroke-width="1.5"><rect x="1.4" y="0.9" width="5.6" height="7" rx="2.8"/><rect x="1.4" y="7.1" width="5.6" height="7" rx="2.8"/></g><path d="M4.2 4.6 V10.4" stroke="#dcdcdc" stroke-width="1.6"/></svg>
<div class="a" style="left:1436px;top:515.4px;width:56px;height:34px;background:#ffffff;border:1.2px solid #2c2c2c;box-sizing:border-box"></div>
<span class="t" style="left:1501.7px;top:527.00px;font-size:13.1px;color:#e2e2e2;transform:scaleX(0.9140)">Curves 1</span>
<svg class="a" style="left:1283.6px;top:562.4px;" width="13.6" height="9.2" viewBox="0 0 13.6 9.2"><path d="M0.3 4.6 C3 0.2 10.6 0.2 13.3 4.6 C10.6 9 3 9 0.3 4.6 Z" fill="#f2e4e4"/><circle cx="6.8" cy="4.6" r="2.6" fill="#b34040"/><circle cx="7.7" cy="3.7" r="0.95" fill="#f2e4e4"/></svg>
<svg class="a" style="left:1338px;top:562px;" width="5" height="10" viewBox="0 0 5 10"><path d="M0.7 0.6 L4 5 L0.7 9.4" fill="none" stroke="#cfcfcf" stroke-width="1.1"/></svg>
<svg class="a" style="left:1349px;top:561.4px;" width="14" height="11.5" viewBox="0 0 14 11.5"><path d="M0.4 1.2 C0.4 0.7 0.8 0.4 1.2 0.4 H5.4 L6.6 2 H13 C13.4 2 13.6 2.3 13.6 2.6 V3.2 H0.4 Z" fill="#e0e0e0"/><rect x="0.4" y="3.9" width="13.2" height="7.2" rx="0.6" fill="#e0e0e0"/></svg>
<span class="t" style="left:1375.2px;top:561.00px;font-size:13.1px;color:#e2e2e2;transform:scaleX(0.9499)">Spessori</span>
<div class="a" style="left:1374px;top:573.6px;width:49px;height:1.1px;background:#e2e2e2;"></div>
<div class="a" style="left:1284px;top:585.6px;width:12.2px;height:12px;background:#4f4f4f;border:1px solid #646464;border-top-color:#5a5a5a;box-sizing:border-box"></div>
<svg class="a" style="left:1310px;top:586.4px;" width="5" height="10" viewBox="0 0 5 10"><path d="M0.7 0.6 L4 5 L0.7 9.4" fill="none" stroke="#cfcfcf" stroke-width="1.1"/></svg>
<svg class="a" style="left:1321px;top:586px;" width="14" height="11.5" viewBox="0 0 14 11.5"><path d="M0.4 1.2 C0.4 0.7 0.8 0.4 1.2 0.4 H5.4 L6.6 2 H13 C13.4 2 13.6 2.3 13.6 2.6 V3.2 H0.4 Z" fill="#e0e0e0"/><rect x="0.4" y="3.9" width="13.2" height="7.2" rx="0.6" fill="#e0e0e0"/></svg>
<span class="t" style="left:1347.7px;top:586.00px;font-size:13.1px;color:#e2e2e2;transform:scaleX(0.9363)">Group 1</span>
<div class="a" style="left:1284px;top:621px;width:12.2px;height:12px;background:#4f4f4f;border:1px solid #646464;border-top-color:#5a5a5a;box-sizing:border-box"></div>
<div class="a" style="left:1309.4px;top:609.4px;width:55.6px;height:34.2px;background-color:#6c6c6c;background-image:linear-gradient(45deg,#8c8c8c 25%,transparent 25%,transparent 75%,#8c8c8c 75%),linear-gradient(45deg,#8c8c8c 25%,transparent 25%,transparent 75%,#8c8c8c 75%);background-size:8px 8px;background-position:0 0,4px 4px;border:1px solid #2c2c2c;box-sizing:border-box"></div><svg class="a" style="left:1333px;top:613px;" width="10" height="10" viewBox="0 0 10 10"><circle cx="5" cy="5" r="3.4" fill="none" stroke="#8ac4d4" stroke-width="0.6" stroke-dasharray="1.2 1"/></svg><div class="a" style="left:1350.4px;top:630.4px;width:14.6px;height:13.2px;background:#484848;border-left:1px solid #2c2c2c;border-top:1px solid #2c2c2c;box-sizing:border-box"></div><svg class="a" style="left:1352.8px;top:632.8px;overflow:visible" width="11" height="12" viewBox="0 0 11 12"><path d="M3.2 0.4 H7.4 L10 3 V8.6 H3.2 Z" fill="none" stroke="#e8e8e8" stroke-width="1.1"/><path d="M7.2 0.4 V3.2 H10" fill="none" stroke="#e8e8e8" stroke-width="0.9"/><rect x="0.4" y="5.4" width="5.4" height="4" fill="#e8e8e8"/><rect x="0.4" y="10.6" width="5.4" height="1" fill="#e8e8e8"/></svg>
<span class="t" style="left:1374.8px;top:621.00px;font-size:13.1px;color:#e2e2e2;transform:scaleX(0.8474)">GRID_BLUE_AXES.PNG</span>
<div class="a" style="left:1573px;top:649px;width:10.4px;height:44.8px;background:#454545;"></div>
<svg class="a" style="left:1283.6px;top:666.9px;" width="13.6" height="9.2" viewBox="0 0 13.6 9.2"><path d="M0.3 4.6 C3 0.2 10.6 0.2 13.3 4.6 C10.6 9 3 9 0.3 4.6 Z" fill="#e6e6e6"/><circle cx="6.8" cy="4.6" r="2.6" fill="#535353"/><circle cx="7.7" cy="3.7" r="0.95" fill="#e6e6e6"/></svg>
<div class="a" style="left:1309.4px;top:653.5px;width:55.6px;height:34.2px;background-color:#6c6c6c;background-image:linear-gradient(45deg,#8c8c8c 25%,transparent 25%,transparent 75%,#8c8c8c 75%),linear-gradient(45deg,#8c8c8c 25%,transparent 25%,transparent 75%,#8c8c8c 75%);background-size:8px 8px;background-position:0 0,4px 4px;border:1px solid #2c2c2c;box-sizing:border-box"></div><div class="a" style="left:1350.4px;top:674.5px;width:14.6px;height:13.2px;background:#484848;border-left:1px solid #2c2c2c;border-top:1px solid #2c2c2c;box-sizing:border-box"></div><svg class="a" style="left:1352.8px;top:676.9px;overflow:visible" width="11" height="12" viewBox="0 0 11 12"><path d="M3.2 0.4 H7.4 L10 3 V8.6 H3.2 Z" fill="none" stroke="#e8e8e8" stroke-width="1.1"/><path d="M7.2 0.4 V3.2 H10" fill="none" stroke="#e8e8e8" stroke-width="0.9"/><rect x="0.4" y="5.4" width="5.4" height="4" fill="#e8e8e8"/><rect x="0.4" y="10.6" width="5.4" height="1" fill="#e8e8e8"/></svg>
<span class="t" style="left:1374.8px;top:665.00px;font-size:13.1px;color:#e2e2e2;transform:scaleX(0.8474)">GRID_BLUE_AXES.PNG</span>
<svg class="a" style="left:1557px;top:665px;" width="14" height="13" viewBox="0 0 14 13"><g fill="none" stroke="#c4c4c4" stroke-width="1.1"><circle cx="8.6" cy="4.8" r="4.2"/><circle cx="4.8" cy="7.8" r="4.2" stroke="#9c9c9c"/></g></svg>
<svg class="a" style="left:1574.4px;top:668.4px;" width="8" height="5" viewBox="0 0 8 5"><path d="M0.6 4 L4 0.8 L7.4 4" fill="none" stroke="#c8c8c8" stroke-width="1.1"/></svg>
<svg class="a" style="left:1324.7px;top:708.9px;" width="13.6" height="9.2" viewBox="0 0 13.6 9.2"><path d="M0.3 4.6 C3 0.2 10.6 0.2 13.3 4.6 C10.6 9 3 9 0.3 4.6 Z" fill="#e6e6e6"/><circle cx="6.8" cy="4.6" r="2.6" fill="#535353"/><circle cx="7.7" cy="3.7" r="0.95" fill="#e6e6e6"/></svg>
<div class="a" style="left:1341.5px;top:697.5px;width:55.2px;height:34px;background:#ffffff;border:1.2px solid #2c2c2c;box-sizing:border-box"></div>
<span class="t" style="left:1407.2px;top:705.00px;font-size:13.1px;color:#e2e2e2;transform:scaleX(0.9582)">Smart Filters</span>
<svg class="a" style="left:1341.7px;top:739px;" width="13.6" height="9.2" viewBox="0 0 13.6 9.2"><path d="M0.3 4.6 C3 0.2 10.6 0.2 13.3 4.6 C10.6 9 3 9 0.3 4.6 Z" fill="#e6e6e6"/><circle cx="6.8" cy="4.6" r="2.6" fill="#535353"/><circle cx="7.7" cy="3.7" r="0.95" fill="#e6e6e6"/></svg>
<span class="t" style="left:1360.2px;top:735.00px;font-size:13.1px;color:#e2e2e2;transform:scaleX(0.9537)">Perspective Warp</span>
<div class="a" style="left:1283.8px;top:769.4px;width:12.4px;height:12.2px;background:#5a5a5a;border:1px solid #707070;box-sizing:border-box"></div>
<div class="a" style="left:1309.4px;top:757.5px;width:55.6px;height:34.2px;background-color:#6c6c6c;background-image:linear-gradient(45deg,#8c8c8c 25%,transparent 25%,transparent 75%,#8c8c8c 75%),linear-gradient(45deg,#8c8c8c 25%,transparent 25%,transparent 75%,#8c8c8c 75%);background-size:8px 8px;background-position:0 0,4px 4px;border:1px solid #2c2c2c;box-sizing:border-box"></div><svg class="a" style="left:1331px;top:763px;" width="12" height="10" viewBox="0 0 12 10"><path d="M0 5 H12" stroke="#2030a0" stroke-width="0.7"/><path d="M3 1 V9 M6 1 V9 M9 1 V9" stroke="#8ac4d4" stroke-width="0.5"/></svg><div class="a" style="left:1350.4px;top:778.5px;width:14.6px;height:13.2px;background:#484848;border-left:1px solid #2c2c2c;border-top:1px solid #2c2c2c;box-sizing:border-box"></div><svg class="a" style="left:1352.8px;top:780.9px;overflow:visible" width="11" height="12" viewBox="0 0 11 12"><path d="M3.2 0.4 H7.4 L10 3 V8.6 H3.2 Z" fill="none" stroke="#e8e8e8" stroke-width="1.1"/><path d="M7.2 0.4 V3.2 H10" fill="none" stroke="#e8e8e8" stroke-width="0.9"/><rect x="0.4" y="5.4" width="5.4" height="4" fill="#e8e8e8"/><rect x="0.4" y="10.6" width="5.4" height="1" fill="#e8e8e8"/></svg>
<span class="t" style="left:1374.8px;top:769.00px;font-size:13.1px;color:#e2e2e2;transform:scaleX(0.8474)">GRID_BLUE_AXES.PNG</span>
<svg class="a" style="left:1283.6px;top:814.8px;" width="13.6" height="9.2" viewBox="0 0 13.6 9.2"><path d="M0.3 4.6 C3 0.2 10.6 0.2 13.3 4.6 C10.6 9 3 9 0.3 4.6 Z" fill="#e6e6e6"/><circle cx="6.8" cy="4.6" r="2.6" fill="#535353"/><circle cx="7.7" cy="3.7" r="0.95" fill="#e6e6e6"/></svg>
<div class="a" style="left:1309.4px;top:801.5px;width:55.6px;height:34.2px;background-color:#6c6c6c;background-image:linear-gradient(45deg,#8c8c8c 25%,transparent 25%,transparent 75%,#8c8c8c 75%),linear-gradient(45deg,#8c8c8c 25%,transparent 25%,transparent 75%,#8c8c8c 75%);background-size:8px 8px;background-position:0 0,4px 4px;border:1px solid #2c2c2c;box-sizing:border-box"></div><svg class="a" style="left:1336px;top:811px;" width="28" height="8" viewBox="0 0 28 8"><g fill="#e02020"><rect x="1" y="1" width="1.2" height="1.2"/><rect x="8" y="2" width="1.2" height="1.2"/><rect x="16" y="3" width="1.2" height="1.2"/><rect x="24" y="4" width="1.2" height="1.2"/></g></svg><div class="a" style="left:1350.4px;top:822.5px;width:14.6px;height:13.2px;background:#484848;border-left:1px solid #2c2c2c;border-top:1px solid #2c2c2c;box-sizing:border-box"></div><svg class="a" style="left:1352.6px;top:824.5px;" width="11.4" height="10.6" viewBox="0 0 11.4 10.6"><rect x="1.8" y="1.8" width="7.8" height="7" fill="none" stroke="#e8e8e8" stroke-width="1.1"/><g fill="#484848" stroke="#e8e8e8" stroke-width="0.9"><circle cx="1.8" cy="1.8" r="1.3"/><circle cx="9.6" cy="1.8" r="1.3"/><circle cx="1.8" cy="8.8" r="1.3"/><circle cx="9.6" cy="8.8" r="1.3"/></g></svg>
<span class="t" style="left:1374.8px;top:813.00px;font-size:13.1px;color:#e2e2e2;transform:scaleX(0.8741)">PERSPLINE_W1 RIGHT_LOW</span>
<svg class="a" style="left:1283.6px;top:858.8px;" width="13.6" height="9.2" viewBox="0 0 13.6 9.2"><path d="M0.3 4.6 C3 0.2 10.6 0.2 13.3 4.6 C10.6 9 3 9 0.3 4.6 Z" fill="#e6e6e6"/><circle cx="6.8" cy="4.6" r="2.6" fill="#535353"/><circle cx="7.7" cy="3.7" r="0.95" fill="#e6e6e6"/></svg>
<div class="a" style="left:1309.4px;top:845.5px;width:55.6px;height:34.2px;background-color:#6c6c6c;background-image:linear-gradient(45deg,#8c8c8c 25%,transparent 25%,transparent 75%,#8c8c8c 75%),linear-gradient(45deg,#8c8c8c 25%,transparent 25%,transparent 75%,#8c8c8c 75%);background-size:8px 8px;background-position:0 0,4px 4px;border:1px solid #2c2c2c;box-sizing:border-box"></div><svg class="a" style="left:1338px;top:852px;" width="28" height="8" viewBox="0 0 28 8"><g fill="#e02020"><rect x="1" y="1" width="1.2" height="1.2"/><rect x="8" y="2" width="1.2" height="1.2"/><rect x="16" y="3" width="1.2" height="1.2"/><rect x="24" y="4" width="1.2" height="1.2"/></g></svg>
<span class="t" style="left:1374.8px;top:857.00px;font-size:13.1px;color:#e2e2e2;transform:scaleX(0.8634)">PERSPLINE_W1 RIGHT_UP</span>
</div></div>
<div class="a" style="left:1583.4px;top:202.6px;width:15.2px;height:663.4px;background:#4a4a4a;"></div>
<div class="a" style="left:1585.4px;top:291px;width:12px;height:420px;background:#6a6a6a;border-radius:1px"></div>
<svg class="a" style="left:1587px;top:211px;" width="8" height="5" viewBox="0 0 8 5"><path d="M0.6 4 L4 0.8 L7.4 4" fill="none" stroke="#c8c8c8" stroke-width="1.1"/></svg>
<svg class="a" style="left:1587px;top:854px;" width="8" height="5" viewBox="0 0 8 5"><path d="M0.6 0.8 L4 4 L7.4 0.8" fill="none" stroke="#c8c8c8" stroke-width="1.1"/></svg>
<div class="a" style="left:1274.6px;top:866px;width:325px;height:25.4px;background:#535353;"></div>
<div class="a" style="left:1274.6px;top:866px;width:325px;height:1px;background:#444;"></div>
<div class="a" style="left:1274.6px;top:891.2px;width:325px;height:1.6px;background:#3a3a3a;"></div>
<div class="a" style="left:1274.6px;top:892.8px;width:325px;height:7.2px;background:#4e4e4e;"></div>
<div class="a" style="left:1427px;top:893.6px;width:19px;height:3.6px;background:repeating-linear-gradient(90deg,#3e3e3e 0 1px,#5a5a5a 1px 2px)"></div>
<svg class="a" style="left:1397px;top:873.6px;" width="14.4" height="9.4" viewBox="0 0 14.4 9.4"><g fill="none" stroke="#8c8c8c" stroke-width="1.4"><rect x="0.7" y="1.4" width="7.4" height="6.4" rx="3.2"/><rect x="6.3" y="1.4" width="7.4" height="6.4" rx="3.2"/></g></svg>
<span class="t" style="left:1424.8px;top:871.00px;font-size:14.5px;color:#dcdcdc;transform:scaleX(1.1524);font-style:italic">fx</span>
<svg class="a" style="left:1436.4px;top:883.4px;" width="4" height="3" viewBox="0 0 4 3"><path d="M0 0 H4 L2 2.6 Z" fill="#dcdcdc"/></svg>
<svg class="a" style="left:1451px;top:873px;" width="13.4" height="10" viewBox="0 0 13.4 10"><rect x="0" y="0" width="13.4" height="10" fill="#d8d8d8"/><circle cx="6.7" cy="5" r="3" fill="#484848"/></svg>
<svg class="a" style="left:1479.4px;top:872.4px;" width="12" height="12" viewBox="0 0 12 12"><circle cx="6" cy="6" r="5.2" fill="none" stroke="#d8d8d8" stroke-width="1.2"/><path d="M2.3 9.7 A5.2 5.2 0 0 0 9.7 2.3 Z" fill="#d8d8d8"/></svg>
<svg class="a" style="left:1490.4px;top:883.4px;" width="4" height="3" viewBox="0 0 4 3"><path d="M0 0 H4 L2 2.6 Z" fill="#dcdcdc"/></svg>
<svg class="a" style="left:1506px;top:872.6px;" width="12.4" height="10.4" viewBox="0 0 12.4 10.4"><path d="M0.3 1 C0.3 0.6 0.6 0.3 1 0.3 H4.6 L5.8 1.8 H11.6 C11.9 1.8 12.1 2 12.1 2.3 V9.4 C12.1 9.8 11.8 10 11.5 10 H0.9 C0.6 10 0.3 9.8 0.3 9.4 Z" fill="#d8d8d8"/></svg>
<svg class="a" style="left:1534px;top:873px;" width="10" height="10.6" viewBox="0 0 10 10.6"><path d="M0.6 0.6 H9.2 V10 H4 L0.6 6.6 Z" fill="none" stroke="#d8d8d8" stroke-width="1.2"/><path d="M0.6 6.6 H4 V10 Z" fill="#d8d8d8"/></svg>
<svg class="a" style="left:1560.4px;top:871.6px;" width="10.4" height="12.6" viewBox="0 0 10.4 12.6"><path d="M0.2 2.4 H10.2 M3.4 2.2 V0.7 H7 V2.2" fill="none" stroke="#d8d8d8" stroke-width="1.1"/><path d="M1.4 3.8 H9 V12 H1.4 Z" fill="none" stroke="#d8d8d8" stroke-width="1.1"/><path d="M3.9 5 V10.8 M6.5 5 V10.8" stroke="#d8d8d8" stroke-width="1"/></svg>
</body></html>
